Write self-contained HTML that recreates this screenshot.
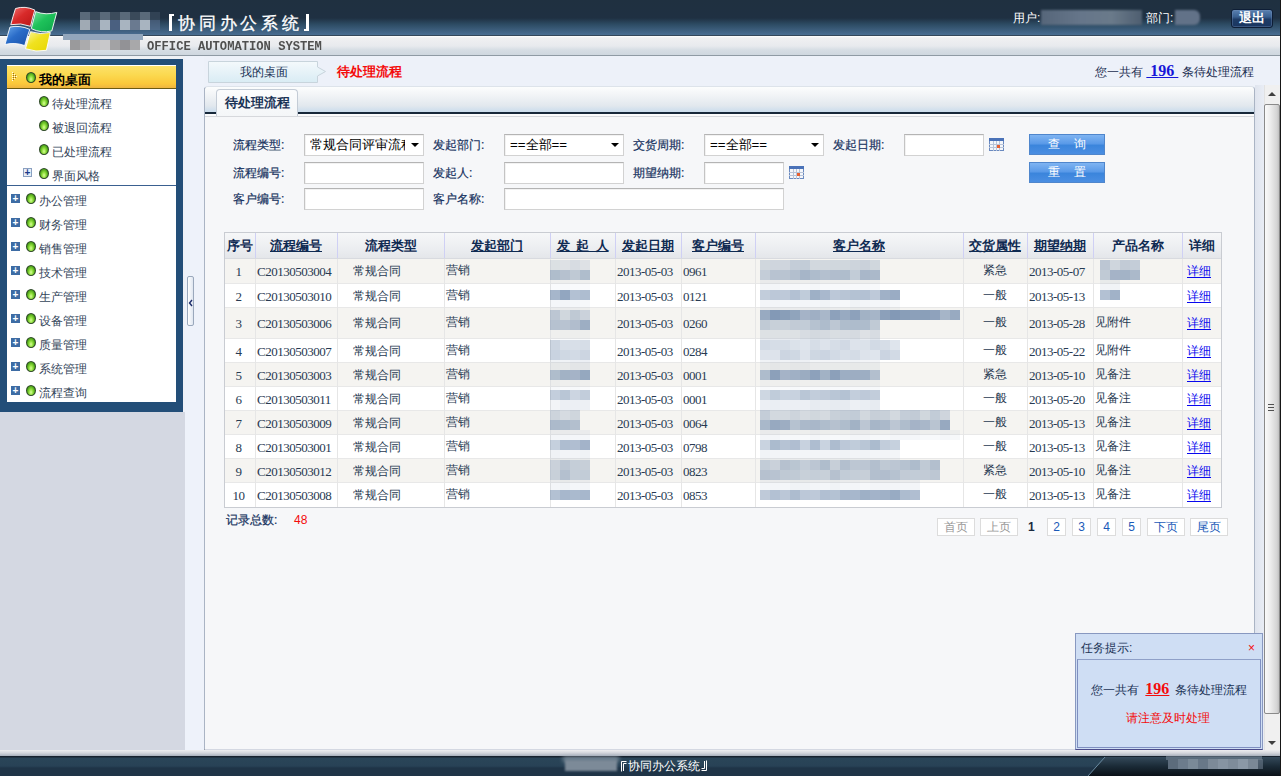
<!DOCTYPE html>
<html><head><meta charset="utf-8">
<style>
*{margin:0;padding:0;box-sizing:border-box}
html,body{width:1281px;height:776px;overflow:hidden;background:#d4d8e2;font-family:"Liberation Sans",sans-serif;font-size:12px;color:#333}
.a{position:absolute;white-space:nowrap}
.blur{filter:blur(2px)}
#hdr{left:0;top:0;width:1281px;height:36px;background:linear-gradient(#1f3040 0,#1f3042 18px,#2c4a62 24px,#4a6e92 35px);}
#hdr2{left:0;top:35px;width:1281px;height:1px;background:#34475a}
#band{left:0;top:36px;width:1281px;height:20px;background:linear-gradient(#ffffff 0,#f0f0f2 2px,#e8eaee 10px,#d6dde4 14px,#cfd7df 19px)}
#bandl{left:0;top:55px;width:1281px;height:1px;background:#8f9aa4}
#ftr{left:0;top:756px;width:1281px;height:20px;background:linear-gradient(#17222e 0,#17222e 1px,#2a4558 2px,#284256 10px,#1f3447 12px,#1f3447)}
#ftrb{left:0;top:750px;width:1281px;height:6px;background:linear-gradient(#eeeef0,#d4d6dc 50%,#a8b0bc)}
#title{left:178px;top:14px;color:#fff;font-size:17px;letter-spacing:3.8px;line-height:20px;-webkit-text-stroke:0.3px #fff}
#oas{left:147px;top:39px;font-family:"Liberation Mono",monospace;font-weight:bold;font-size:12.15px;color:#505050;line-height:14px;transform:scaleY(1.1);transform-origin:0 0}
#user{left:1013px;top:10px;color:#fff;font-size:12px}
#dept{left:1146px;top:10px;color:#fff;font-size:12px}
#logout{left:1231px;top:9px;width:42px;height:19px;border-radius:3px;background:linear-gradient(#5a80b0 0,#3a6090 40%,#1e3c66 55%,#1a3660 100%);border:1px solid #0e1e36;box-shadow:inset 0 0 0 1px rgba(120,150,190,0.35);color:#fff;font-weight:bold;font-size:12.5px;text-align:center;line-height:17px}
#sbf{left:0;top:59px;width:183px;height:353px;background:#234e78}
#sbi{left:7px;top:65px;width:169px;height:337px;background:#fff}
#sbh{left:7px;top:66px;width:169px;height:23px;background:linear-gradient(#fce16a 0,#fbd950 40%,#fbc83a 80%,#eeb540 100%);border-bottom:1px solid #6b5a12}
.ball{position:absolute;width:10px;height:11px;border-radius:50%;border:1px solid #2e4a26;background:radial-gradient(ellipse at 50% 70%,#d8ff9a 0,#8ede3a 35%,#4aa018 70%,#2a5a18 100%)}
.plus{position:absolute;width:9px;height:9px;background:#3d6ca4;color:#fff;font-size:10px;line-height:9px;text-align:center;font-weight:bold}
.si{position:absolute;font-size:12px;color:#34455a;line-height:14px;white-space:nowrap}
#split{left:185px;top:56px;width:19px;height:694px;background:#eef2fa}
#splitb{left:204px;top:88px;width:1px;height:662px;background:#9aa0a8}
#handle{left:187px;top:276px;width:7px;height:50px;border:1px solid #9aa8bc;border-radius:2px;background:linear-gradient(90deg,#fff,#dfe6f0)}
#main{left:185px;top:56px;width:1096px;height:693px;background:#edf1f9}
#panel{left:204px;top:86px;width:1051px;height:663px;background:#f6f7f9;border:1px solid #aab4c4;border-top-color:#dde3ea;border-bottom:none;border-radius:4px 4px 0 0}
#tabbar{left:205px;top:87px;width:1049px;height:25px;background:linear-gradient(#fcfdfd 0,#eff2f5 40%,#e2e8ee 75%,#cadcec 100%);border-radius:4px 4px 0 0}
#tabline{left:205px;top:112px;width:1049px;height:2px;background:#17283a}
#tab{left:216px;top:89px;width:82px;height:27px;background:linear-gradient(#fbfcfd,#f4f6f8);border:1px solid #c4ccd6;border-bottom:none;border-radius:4px 4px 0 0;color:#1a3356;font-weight:bold;font-size:13px;text-align:center;line-height:26px}
</style></head><body>
<div id="hdr" class="a"></div><div id="hdr2" class="a"></div><div id="band" class="a"></div><div id="bandl" class="a"></div>
<div id="main" class="a"></div>
<div class="a" style="left:0px;top:56px;width:183px;height:3px;background:#eff1f5"></div>
<svg class="a" style="left:0;top:0" width="64" height="56" viewBox="0 0 64 56">
 <defs>
  <linearGradient id="lr" x1="0" y1="0" x2="1" y2="1"><stop offset="0" stop-color="#f27070"/><stop offset="0.45" stop-color="#d82a2a"/><stop offset="1" stop-color="#b81414"/></linearGradient>
  <linearGradient id="lg" x1="0" y1="0" x2="1" y2="1"><stop offset="0" stop-color="#7ae0a0"/><stop offset="0.45" stop-color="#1ec25a"/><stop offset="1" stop-color="#0ea44a"/></linearGradient>
  <linearGradient id="lb" x1="0" y1="0" x2="1" y2="1"><stop offset="0" stop-color="#6aa8ec"/><stop offset="0.45" stop-color="#2a6cc8"/><stop offset="1" stop-color="#1a50a8"/></linearGradient>
  <linearGradient id="ly" x1="0" y1="0" x2="1" y2="1"><stop offset="0" stop-color="#fbf6a0"/><stop offset="0.45" stop-color="#f0e220"/><stop offset="1" stop-color="#e6d600"/></linearGradient>
 </defs>
 <path d="M15.5 8.5 Q25 5.5 34.8 10 Q32.5 18 30.5 26.3 Q21 22.5 10.8 24.7 Q13 16 15.5 8.5 Z" fill="url(#lr)" stroke="#fff" stroke-width="0.9"/>
 <path d="M35.6 11.6 Q46 15.5 56.8 12.4 Q54.5 21 51.8 30.9 Q41 33.5 31.3 28.6 Q33.5 20 35.6 11.6 Z" fill="url(#lg)" stroke="#fff" stroke-width="0.9"/>
 <path d="M10 27 Q20 25 29.8 29.4 Q27 37 24.7 45.6 Q15 42 5 44.5 Q7.5 35.5 10 27 Z" fill="url(#lb)" stroke="#fff" stroke-width="0.9"/>
 <path d="M30.5 31.7 Q40 35 50.3 32.5 Q48.5 41 46.4 50.3 Q36 52.5 25.5 48.7 Q28 40 30.5 31.7 Z" fill="url(#ly)" stroke="#fff" stroke-width="0.9"/>
</svg>
<div class="a" style="left:0;top:0;filter:blur(0.6px)"><div class="a" style="left:80px;top:12px;width:10px;height:8px;background:#5a6a7a;opacity:1"></div><div class="a" style="left:80px;top:20px;width:10px;height:10px;background:#a0aab4;opacity:1"></div><div class="a" style="left:90px;top:12px;width:10px;height:8px;background:#3a4a5a;opacity:1"></div><div class="a" style="left:90px;top:20px;width:10px;height:10px;background:#5a6a80;opacity:1"></div><div class="a" style="left:100px;top:12px;width:10px;height:8px;background:#5a6a7a;opacity:1"></div><div class="a" style="left:100px;top:20px;width:10px;height:10px;background:#a8b4c0;opacity:1"></div><div class="a" style="left:110px;top:12px;width:10px;height:8px;background:#3c4c5c;opacity:1"></div><div class="a" style="left:110px;top:20px;width:10px;height:10px;background:#4a6080;opacity:1"></div><div class="a" style="left:120px;top:12px;width:10px;height:8px;background:#5a6a7a;opacity:1"></div><div class="a" style="left:120px;top:20px;width:10px;height:10px;background:#a8b4c0;opacity:1"></div><div class="a" style="left:130px;top:12px;width:10px;height:8px;background:#3a4a5a;opacity:1"></div><div class="a" style="left:130px;top:20px;width:10px;height:10px;background:#6a7a90;opacity:1"></div><div class="a" style="left:140px;top:12px;width:10px;height:8px;background:#5a6a7a;opacity:1"></div><div class="a" style="left:140px;top:20px;width:10px;height:10px;background:#a8b4c0;opacity:1"></div><div class="a" style="left:150px;top:12px;width:10px;height:8px;background:#3e4e60;opacity:0.6"></div><div class="a" style="left:150px;top:20px;width:10px;height:10px;background:#5a7090;opacity:0.6"></div><div class="a" style="left:63px;top:34px;width:80px;height:6px;background:#92a6bc"></div><div class="a" style="left:70px;top:40px;width:10px;height:10px;background:#9a9a9c"></div><div class="a" style="left:80px;top:40px;width:10px;height:10px;background:#ababad"></div><div class="a" style="left:90px;top:40px;width:10px;height:10px;background:#c4c4c6"></div><div class="a" style="left:100px;top:40px;width:10px;height:10px;background:#c8c8ca"></div><div class="a" style="left:110px;top:40px;width:10px;height:10px;background:#a2a2a4"></div><div class="a" style="left:120px;top:40px;width:10px;height:10px;background:#929296"></div><div class="a" style="left:130px;top:40px;width:10px;height:10px;background:#a8a8aa"></div></div>
<div id="title" class="a">协同办公系统</div>
<div class="a" style="left:169px;top:14px;width:5px;height:17px;border-left:3px solid #fff;border-top:2px solid #fff"></div>
<div class="a" style="left:304px;top:14px;width:5px;height:17px;border-right:3px solid #fff;border-bottom:2px solid #fff"></div>
<div id="oas" class="a">OFFICE AUTOMATION SYSTEM</div>
<div id="user" class="a">用户:</div>
<div class="a" style="left:1041px;top:10px;width:101px;height:15px;background:linear-gradient(90deg,#56667a,#66768a 40%,#6a7a8a 70%,#4e5e70);filter:blur(1.2px)"></div>
<div id="dept" class="a">部门:</div>
<div class="a" style="left:1175px;top:10px;width:25px;height:15px;background:#627288;filter:blur(1.2px);border-radius:0 6px 6px 0"></div>
<div id="logout" class="a">退出</div>
<div id="sbf" class="a"></div><div id="sbi" class="a"></div><div id="sbh" class="a"></div>
<svg class="a" style="left:12px;top:72px" width="6" height="10" viewBox="0 0 6 10"><g fill="#fffbe0"><rect x="0" y="0" width="1" height="1"/><rect x="0" y="2" width="1" height="1"/><rect x="0" y="4" width="1" height="1"/><rect x="0" y="6" width="1" height="1"/><rect x="0" y="8" width="1" height="1"/><rect x="2" y="2" width="1" height="1"/><rect x="2" y="4" width="1" height="1"/><rect x="2" y="6" width="1" height="1"/><rect x="4" y="4" width="1" height="1"/></g><g fill="#9a6a10"><rect x="1" y="1" width="1" height="1"/><rect x="1" y="3" width="1" height="1"/><rect x="1" y="5" width="1" height="1"/><rect x="1" y="7" width="1" height="1"/><rect x="3" y="3" width="1" height="1"/><rect x="3" y="5" width="1" height="1"/></g></svg>
<div class="ball" style="left:26px;top:72px;"></div>
<div class="si" style="left:39px;top:73px;font-weight:bold;font-size:13px;color:#000">我的桌面</div>
<div class="ball" style="left:39px;top:96px;"></div>
<div class="si" style="left:52px;top:97px;">待处理流程</div>
<div class="ball" style="left:39px;top:120px;"></div>
<div class="si" style="left:52px;top:121px;">被退回流程</div>
<div class="ball" style="left:39px;top:144px;"></div>
<div class="si" style="left:52px;top:145px;">已处理流程</div>
<div class="plus" style="left:23px;top:168px;background:#e8eef8;border:1px solid #8aa0c0;color:#1a3a8a;line-height:8px">+</div>
<div class="ball" style="left:39px;top:168px;"></div>
<div class="si" style="left:52px;top:169px;">界面风格</div>
<div class="a" style="left:7px;top:185px;width:169px;height:1px;background:#3a6090"></div>
<div class="plus" style="left:11px;top:194px;">+</div>
<div class="ball" style="left:26px;top:193px;"></div>
<div class="si" style="left:39px;top:194px;">办公管理</div>
<div class="plus" style="left:11px;top:218px;">+</div>
<div class="ball" style="left:26px;top:217px;"></div>
<div class="si" style="left:39px;top:218px;">财务管理</div>
<div class="plus" style="left:11px;top:242px;">+</div>
<div class="ball" style="left:26px;top:241px;"></div>
<div class="si" style="left:39px;top:242px;">销售管理</div>
<div class="plus" style="left:11px;top:266px;">+</div>
<div class="ball" style="left:26px;top:265px;"></div>
<div class="si" style="left:39px;top:266px;">技术管理</div>
<div class="plus" style="left:11px;top:290px;">+</div>
<div class="ball" style="left:26px;top:289px;"></div>
<div class="si" style="left:39px;top:290px;">生产管理</div>
<div class="plus" style="left:11px;top:314px;">+</div>
<div class="ball" style="left:26px;top:313px;"></div>
<div class="si" style="left:39px;top:314px;">设备管理</div>
<div class="plus" style="left:11px;top:338px;">+</div>
<div class="ball" style="left:26px;top:337px;"></div>
<div class="si" style="left:39px;top:338px;">质量管理</div>
<div class="plus" style="left:11px;top:362px;">+</div>
<div class="ball" style="left:26px;top:361px;"></div>
<div class="si" style="left:39px;top:362px;">系统管理</div>
<div class="plus" style="left:11px;top:386px;">+</div>
<div class="ball" style="left:26px;top:385px;"></div>
<div class="si" style="left:39px;top:386px;">流程查询</div>
<div id="split" class="a"></div>
<div class="a" style="left:183px;top:56px;width:2px;height:356px;background:#eef1f7"></div>
<div id="splitb" class="a"></div><div id="handle" class="a"></div>
<svg class="a" style="left:188px;top:299px" width="6" height="8" viewBox="0 0 6 8"><path d="M4 1 L1.5 4 L4 7" fill="none" stroke="#1a2a6a" stroke-width="1.4"/></svg>
<div id="panel" class="a"></div><div id="tabbar" class="a"></div><div id="tabline" class="a"></div>
<div class="a" style="left:205px;top:114px;width:1049px;height:2px;background:#fbfbfc"></div>
<div class="a" style="left:205px;top:116px;width:1049px;height:1px;background:#d6d8dc"></div>
<div id="tab" class="a">待处理流程</div>
<svg class="a" style="left:207px;top:60px" width="122" height="24" viewBox="0 0 122 24">
 <defs><linearGradient id="bcg" x1="0" y1="0" x2="0" y2="1"><stop offset="0" stop-color="#f4f9fc"/><stop offset="1" stop-color="#d9ecf4"/></linearGradient></defs>
 <path d="M1.5 1.5 H110.5 V7 L118.5 11.5 L110.5 16 V22.5 H1.5 Z" fill="url(#bcg)" stroke="#c8d4dc" stroke-width="1"/>
</svg>
<div class="a" style="left:240px;top:65px;color:#1a3356;font-size:12px;line-height:14px">我的桌面</div>
<div class="a" style="left:337px;top:64px;color:#f40c0c;font-weight:bold;font-size:13px;line-height:15px">待处理流程</div>
<div class="a" style="left:1095px;top:63px;color:#1a2d50;font-size:12px;line-height:15px">您一共有 <span style="color:#1616d8;font-family:'Liberation Serif',serif;font-weight:bold;font-size:16px;text-decoration:underline">&nbsp;196&nbsp;</span> 条待处理流程</div>
<div class="a" style="left:233px;top:138px;color:#163260;font-size:12px;line-height:14px;-webkit-text-stroke:0.2px #163260">流程类型:</div>
<div class="a" style="left:304px;top:134px;width:120px;height:22px;background:#fff;border:1px solid #d2d2d2;border-top-color:#b4b4b4;border-left-color:#c4c4c4;box-shadow:inset 1px 1px 0 #f2f2f2"></div>
<div class="a" style="left:310px;top:137px;width:95px;overflow:hidden;color:#000;font-size:13.33px;line-height:15px">常规合同评审流程</div>
<div class="a" style="left:411px;top:143px;width:0px;height:0px;border-left:4px solid transparent;border-right:4px solid transparent;border-top:4px solid #000"></div>
<div class="a" style="left:433px;top:138px;color:#163260;font-size:12px;line-height:14px;-webkit-text-stroke:0.2px #163260">发起部门:</div>
<div class="a" style="left:504px;top:134px;width:120px;height:22px;background:#fff;border:1px solid #d2d2d2;border-top-color:#b4b4b4;border-left-color:#c4c4c4;box-shadow:inset 1px 1px 0 #f2f2f2"></div>
<div class="a" style="left:510px;top:137px;width:95px;overflow:hidden;color:#000;font-size:13.33px;line-height:15px">==全部==</div>
<div class="a" style="left:611px;top:143px;width:0px;height:0px;border-left:4px solid transparent;border-right:4px solid transparent;border-top:4px solid #000"></div>
<div class="a" style="left:633px;top:138px;color:#163260;font-size:12px;line-height:14px;-webkit-text-stroke:0.2px #163260">交货周期:</div>
<div class="a" style="left:704px;top:134px;width:120px;height:22px;background:#fff;border:1px solid #d2d2d2;border-top-color:#b4b4b4;border-left-color:#c4c4c4;box-shadow:inset 1px 1px 0 #f2f2f2"></div>
<div class="a" style="left:710px;top:137px;width:95px;overflow:hidden;color:#000;font-size:13.33px;line-height:15px">==全部==</div>
<div class="a" style="left:811px;top:143px;width:0px;height:0px;border-left:4px solid transparent;border-right:4px solid transparent;border-top:4px solid #000"></div>
<div class="a" style="left:833px;top:138px;color:#163260;font-size:12px;line-height:14px;-webkit-text-stroke:0.2px #163260">发起日期:</div>
<div class="a" style="left:904px;top:134px;width:80px;height:22px;background:#fff;border:1px solid #d2d2d2;border-top-color:#b4b4b4;border-left-color:#c4c4c4;box-shadow:inset 1px 1px 0 #f2f2f2"></div>
<div class="a" style="left:233px;top:166px;color:#163260;font-size:12px;line-height:14px;-webkit-text-stroke:0.2px #163260">流程编号:</div>
<div class="a" style="left:304px;top:162px;width:120px;height:22px;background:#fff;border:1px solid #d2d2d2;border-top-color:#b4b4b4;border-left-color:#c4c4c4;box-shadow:inset 1px 1px 0 #f2f2f2"></div>
<div class="a" style="left:433px;top:166px;color:#163260;font-size:12px;line-height:14px;-webkit-text-stroke:0.2px #163260">发起人:</div>
<div class="a" style="left:504px;top:162px;width:120px;height:22px;background:#fff;border:1px solid #d2d2d2;border-top-color:#b4b4b4;border-left-color:#c4c4c4;box-shadow:inset 1px 1px 0 #f2f2f2"></div>
<div class="a" style="left:633px;top:166px;color:#163260;font-size:12px;line-height:14px;-webkit-text-stroke:0.2px #163260">期望纳期:</div>
<div class="a" style="left:704px;top:162px;width:80px;height:22px;background:#fff;border:1px solid #d2d2d2;border-top-color:#b4b4b4;border-left-color:#c4c4c4;box-shadow:inset 1px 1px 0 #f2f2f2"></div>
<div class="a" style="left:233px;top:192px;color:#163260;font-size:12px;line-height:14px;-webkit-text-stroke:0.2px #163260">客户编号:</div>
<div class="a" style="left:304px;top:188px;width:120px;height:22px;background:#fff;border:1px solid #d2d2d2;border-top-color:#b4b4b4;border-left-color:#c4c4c4;box-shadow:inset 1px 1px 0 #f2f2f2"></div>
<div class="a" style="left:433px;top:192px;color:#163260;font-size:12px;line-height:14px;-webkit-text-stroke:0.2px #163260">客户名称:</div>
<div class="a" style="left:504px;top:188px;width:280px;height:22px;background:#fff;border:1px solid #d2d2d2;border-top-color:#b4b4b4;border-left-color:#c4c4c4;box-shadow:inset 1px 1px 0 #f2f2f2"></div>
<svg class="a" style="left:989px;top:138px" width="15" height="13" viewBox="0 0 15 13"><rect x="0.5" y="0.5" width="14" height="12" fill="#f4f6fa" stroke="#6a8ac0"/><rect x="0" y="0" width="15" height="3" fill="#4a72b8"/><g stroke="#b8c4d8" stroke-width="1"><path d="M4.5 3V13M7.5 3V13M10.5 3V13M0 6.5H15M0 9.5H15"/></g><rect x="8" y="7" width="3" height="3" fill="#e86030"/></svg>
<svg class="a" style="left:789px;top:166px" width="15" height="13" viewBox="0 0 15 13"><rect x="0.5" y="0.5" width="14" height="12" fill="#f4f6fa" stroke="#6a8ac0"/><rect x="0" y="0" width="15" height="3" fill="#4a72b8"/><g stroke="#b8c4d8" stroke-width="1"><path d="M4.5 3V13M7.5 3V13M10.5 3V13M0 6.5H15M0 9.5H15"/></g><rect x="8" y="7" width="3" height="3" fill="#e86030"/></svg>
<div class="a" style="left:1029px;top:134px;width:76px;height:21px;background:linear-gradient(#7fb4f2 0,#5a9ae8 45%,#3b85dc 55%,#4a8ee2 100%);border:1px solid #4f86cc;color:#fff;font-size:12px;line-height:19px;text-align:center">查&nbsp;&nbsp;&nbsp;&nbsp;询</div>
<div class="a" style="left:1029px;top:162px;width:76px;height:21px;background:linear-gradient(#7fb4f2 0,#5a9ae8 45%,#3b85dc 55%,#4a8ee2 100%);border:1px solid #4f86cc;color:#fff;font-size:12px;line-height:19px;text-align:center">重&nbsp;&nbsp;&nbsp;&nbsp;置</div>
<div class="a" style="left:224px;top:232px;width:998px;height:276px;background:#fff;border:1px solid #c9ccd2"></div>
<div class="a" style="left:225px;top:233px;width:996px;height:25px;background:linear-gradient(#f6f7f8,#eceef1 60%,#e4e6ea)"></div>
<div class="a" style="left:225px;top:258px;width:996px;height:1px;background:#d8dadf"></div>
<div class="a" style="left:225px;top:259px;width:996px;height:24px;background:#f5f4f1"></div>
<div class="a" style="left:225px;top:283px;width:996px;height:1px;background:#e8e8e8"></div>
<div class="a" style="left:225px;top:284px;width:996px;height:23px;background:#ffffff"></div>
<div class="a" style="left:225px;top:307px;width:996px;height:1px;background:#e8e8e8"></div>
<div class="a" style="left:225px;top:308px;width:996px;height:30px;background:#f5f4f1"></div>
<div class="a" style="left:225px;top:338px;width:996px;height:1px;background:#e8e8e8"></div>
<div class="a" style="left:225px;top:339px;width:996px;height:23px;background:#ffffff"></div>
<div class="a" style="left:225px;top:362px;width:996px;height:1px;background:#e8e8e8"></div>
<div class="a" style="left:225px;top:363px;width:996px;height:23px;background:#f5f4f1"></div>
<div class="a" style="left:225px;top:386px;width:996px;height:1px;background:#e8e8e8"></div>
<div class="a" style="left:225px;top:387px;width:996px;height:23px;background:#ffffff"></div>
<div class="a" style="left:225px;top:410px;width:996px;height:1px;background:#e8e8e8"></div>
<div class="a" style="left:225px;top:411px;width:996px;height:23px;background:#f5f4f1"></div>
<div class="a" style="left:225px;top:434px;width:996px;height:1px;background:#e8e8e8"></div>
<div class="a" style="left:225px;top:435px;width:996px;height:23px;background:#ffffff"></div>
<div class="a" style="left:225px;top:458px;width:996px;height:1px;background:#e8e8e8"></div>
<div class="a" style="left:225px;top:459px;width:996px;height:23px;background:#f5f4f1"></div>
<div class="a" style="left:225px;top:482px;width:996px;height:1px;background:#e8e8e8"></div>
<div class="a" style="left:225px;top:483px;width:996px;height:24px;background:#ffffff"></div>
<div class="a" style="left:255px;top:233px;width:1px;height:25px;background:#cfd0f4"></div>
<div class="a" style="left:255px;top:259px;width:1px;height:248px;background:#e6e6e6"></div>
<div class="a" style="left:337px;top:233px;width:1px;height:25px;background:#cfd0f4"></div>
<div class="a" style="left:337px;top:259px;width:1px;height:248px;background:#e6e6e6"></div>
<div class="a" style="left:444px;top:233px;width:1px;height:25px;background:#cfd0f4"></div>
<div class="a" style="left:444px;top:259px;width:1px;height:248px;background:#e6e6e6"></div>
<div class="a" style="left:550px;top:233px;width:1px;height:25px;background:#cfd0f4"></div>
<div class="a" style="left:550px;top:259px;width:1px;height:248px;background:#e6e6e6"></div>
<div class="a" style="left:615px;top:233px;width:1px;height:25px;background:#cfd0f4"></div>
<div class="a" style="left:615px;top:259px;width:1px;height:248px;background:#e6e6e6"></div>
<div class="a" style="left:681px;top:233px;width:1px;height:25px;background:#cfd0f4"></div>
<div class="a" style="left:681px;top:259px;width:1px;height:248px;background:#e6e6e6"></div>
<div class="a" style="left:755px;top:233px;width:1px;height:25px;background:#cfd0f4"></div>
<div class="a" style="left:755px;top:259px;width:1px;height:248px;background:#e6e6e6"></div>
<div class="a" style="left:963px;top:233px;width:1px;height:25px;background:#cfd0f4"></div>
<div class="a" style="left:963px;top:259px;width:1px;height:248px;background:#e6e6e6"></div>
<div class="a" style="left:1027px;top:233px;width:1px;height:25px;background:#cfd0f4"></div>
<div class="a" style="left:1027px;top:259px;width:1px;height:248px;background:#e6e6e6"></div>
<div class="a" style="left:1093px;top:233px;width:1px;height:25px;background:#cfd0f4"></div>
<div class="a" style="left:1093px;top:259px;width:1px;height:248px;background:#e6e6e6"></div>
<div class="a" style="left:1182px;top:233px;width:1px;height:25px;background:#cfd0f4"></div>
<div class="a" style="left:1182px;top:259px;width:1px;height:248px;background:#e6e6e6"></div>
<div class="a" style="left:224px;top:239px;width:31px;text-align:center;font-weight:bold;font-size:13px;line-height:14px;color:#0f2a52;">序号</div>
<div class="a" style="left:255px;top:239px;width:82px;text-align:center;font-weight:bold;font-size:13px;line-height:14px;color:#0f2a52;text-decoration:underline;">流程编号</div>
<div class="a" style="left:337px;top:239px;width:107px;text-align:center;font-weight:bold;font-size:13px;line-height:14px;color:#0f2a52;">流程类型</div>
<div class="a" style="left:444px;top:239px;width:106px;text-align:center;font-weight:bold;font-size:13px;line-height:14px;color:#0f2a52;text-decoration:underline;">发起部门</div>
<div class="a" style="left:550px;top:239px;width:65px;text-align:center;font-weight:bold;font-size:13px;line-height:14px;color:#0f2a52;text-decoration:underline;">发&ensp;起&ensp;人</div>
<div class="a" style="left:615px;top:239px;width:66px;text-align:center;font-weight:bold;font-size:13px;line-height:14px;color:#0f2a52;text-decoration:underline;">发起日期</div>
<div class="a" style="left:681px;top:239px;width:74px;text-align:center;font-weight:bold;font-size:13px;line-height:14px;color:#0f2a52;text-decoration:underline;">客户编号</div>
<div class="a" style="left:755px;top:239px;width:208px;text-align:center;font-weight:bold;font-size:13px;line-height:14px;color:#0f2a52;text-decoration:underline;">客户名称</div>
<div class="a" style="left:963px;top:239px;width:64px;text-align:center;font-weight:bold;font-size:13px;line-height:14px;color:#0f2a52;text-decoration:underline;">交货属性</div>
<div class="a" style="left:1027px;top:239px;width:66px;text-align:center;font-weight:bold;font-size:13px;line-height:14px;color:#0f2a52;text-decoration:underline;">期望纳期</div>
<div class="a" style="left:1093px;top:239px;width:89px;text-align:center;font-weight:bold;font-size:13px;line-height:14px;color:#0f2a52;">产品名称</div>
<div class="a" style="left:1182px;top:239px;width:39px;text-align:center;font-weight:bold;font-size:13px;line-height:14px;color:#0f2a52;">详细</div>
<div class="a" style="left:223px;top:265px;width:31px;text-align:center;font-family:'Liberation Serif',serif;color:#283a52;font-size:13px;letter-spacing:-0.5px;line-height:14px">1</div>
<div class="a" style="left:257px;top:265px;font-family:'Liberation Serif',serif;color:#283a52;font-size:13px;letter-spacing:-0.5px;line-height:14px">C20130503004</div>
<div class="a" style="left:353px;top:264px;color:#283a52;font-size:12px;line-height:14px">常规合同</div>
<div class="a" style="left:446px;top:263px;color:#283a52;font-size:12px;line-height:14px">营销</div>
<div class="a" style="left:617px;top:265px;font-family:'Liberation Serif',serif;color:#283a52;font-size:13px;letter-spacing:-0.5px;line-height:14px">2013-05-03</div>
<div class="a" style="left:683px;top:265px;font-family:'Liberation Serif',serif;color:#283a52;font-size:13px;letter-spacing:-0.5px;line-height:14px">0961</div>
<div class="a" style="left:963px;top:263px;width:64px;text-align:center;color:#283a52;font-size:12px;line-height:14px">紧急</div>
<div class="a" style="left:1029px;top:265px;font-family:'Liberation Serif',serif;color:#283a52;font-size:13px;letter-spacing:-0.5px;line-height:14px">2013-05-07</div>
<div class="a" style="left:1187px;top:264px;color:#0808ee;font-size:12px;line-height:14px;text-decoration:underline;text-underline-offset:2px">详细</div>
<div class="a" style="left:223px;top:290px;width:31px;text-align:center;font-family:'Liberation Serif',serif;color:#283a52;font-size:13px;letter-spacing:-0.5px;line-height:14px">2</div>
<div class="a" style="left:257px;top:290px;font-family:'Liberation Serif',serif;color:#283a52;font-size:13px;letter-spacing:-0.5px;line-height:14px">C20130503010</div>
<div class="a" style="left:353px;top:289px;color:#283a52;font-size:12px;line-height:14px">常规合同</div>
<div class="a" style="left:446px;top:288px;color:#283a52;font-size:12px;line-height:14px">营销</div>
<div class="a" style="left:617px;top:290px;font-family:'Liberation Serif',serif;color:#283a52;font-size:13px;letter-spacing:-0.5px;line-height:14px">2013-05-03</div>
<div class="a" style="left:683px;top:290px;font-family:'Liberation Serif',serif;color:#283a52;font-size:13px;letter-spacing:-0.5px;line-height:14px">0121</div>
<div class="a" style="left:963px;top:288px;width:64px;text-align:center;color:#283a52;font-size:12px;line-height:14px">一般</div>
<div class="a" style="left:1029px;top:290px;font-family:'Liberation Serif',serif;color:#283a52;font-size:13px;letter-spacing:-0.5px;line-height:14px">2013-05-13</div>
<div class="a" style="left:1187px;top:289px;color:#0808ee;font-size:12px;line-height:14px;text-decoration:underline;text-underline-offset:2px">详细</div>
<div class="a" style="left:223px;top:317px;width:31px;text-align:center;font-family:'Liberation Serif',serif;color:#283a52;font-size:13px;letter-spacing:-0.5px;line-height:14px">3</div>
<div class="a" style="left:257px;top:317px;font-family:'Liberation Serif',serif;color:#283a52;font-size:13px;letter-spacing:-0.5px;line-height:14px">C20130503006</div>
<div class="a" style="left:353px;top:316px;color:#283a52;font-size:12px;line-height:14px">常规合同</div>
<div class="a" style="left:446px;top:315px;color:#283a52;font-size:12px;line-height:14px">营销</div>
<div class="a" style="left:617px;top:317px;font-family:'Liberation Serif',serif;color:#283a52;font-size:13px;letter-spacing:-0.5px;line-height:14px">2013-05-03</div>
<div class="a" style="left:683px;top:317px;font-family:'Liberation Serif',serif;color:#283a52;font-size:13px;letter-spacing:-0.5px;line-height:14px">0260</div>
<div class="a" style="left:963px;top:315px;width:64px;text-align:center;color:#283a52;font-size:12px;line-height:14px">一般</div>
<div class="a" style="left:1029px;top:317px;font-family:'Liberation Serif',serif;color:#283a52;font-size:13px;letter-spacing:-0.5px;line-height:14px">2013-05-28</div>
<div class="a" style="left:1095px;top:315px;color:#283a52;font-size:12px;line-height:14px">见附件</div>
<div class="a" style="left:1187px;top:316px;color:#0808ee;font-size:12px;line-height:14px;text-decoration:underline;text-underline-offset:2px">详细</div>
<div class="a" style="left:223px;top:345px;width:31px;text-align:center;font-family:'Liberation Serif',serif;color:#283a52;font-size:13px;letter-spacing:-0.5px;line-height:14px">4</div>
<div class="a" style="left:257px;top:345px;font-family:'Liberation Serif',serif;color:#283a52;font-size:13px;letter-spacing:-0.5px;line-height:14px">C20130503007</div>
<div class="a" style="left:353px;top:344px;color:#283a52;font-size:12px;line-height:14px">常规合同</div>
<div class="a" style="left:446px;top:343px;color:#283a52;font-size:12px;line-height:14px">营销</div>
<div class="a" style="left:617px;top:345px;font-family:'Liberation Serif',serif;color:#283a52;font-size:13px;letter-spacing:-0.5px;line-height:14px">2013-05-03</div>
<div class="a" style="left:683px;top:345px;font-family:'Liberation Serif',serif;color:#283a52;font-size:13px;letter-spacing:-0.5px;line-height:14px">0284</div>
<div class="a" style="left:963px;top:343px;width:64px;text-align:center;color:#283a52;font-size:12px;line-height:14px">一般</div>
<div class="a" style="left:1029px;top:345px;font-family:'Liberation Serif',serif;color:#283a52;font-size:13px;letter-spacing:-0.5px;line-height:14px">2013-05-22</div>
<div class="a" style="left:1095px;top:343px;color:#283a52;font-size:12px;line-height:14px">见附件</div>
<div class="a" style="left:1187px;top:344px;color:#0808ee;font-size:12px;line-height:14px;text-decoration:underline;text-underline-offset:2px">详细</div>
<div class="a" style="left:223px;top:369px;width:31px;text-align:center;font-family:'Liberation Serif',serif;color:#283a52;font-size:13px;letter-spacing:-0.5px;line-height:14px">5</div>
<div class="a" style="left:257px;top:369px;font-family:'Liberation Serif',serif;color:#283a52;font-size:13px;letter-spacing:-0.5px;line-height:14px">C20130503003</div>
<div class="a" style="left:353px;top:368px;color:#283a52;font-size:12px;line-height:14px">常规合同</div>
<div class="a" style="left:446px;top:367px;color:#283a52;font-size:12px;line-height:14px">营销</div>
<div class="a" style="left:617px;top:369px;font-family:'Liberation Serif',serif;color:#283a52;font-size:13px;letter-spacing:-0.5px;line-height:14px">2013-05-03</div>
<div class="a" style="left:683px;top:369px;font-family:'Liberation Serif',serif;color:#283a52;font-size:13px;letter-spacing:-0.5px;line-height:14px">0001</div>
<div class="a" style="left:963px;top:367px;width:64px;text-align:center;color:#283a52;font-size:12px;line-height:14px">紧急</div>
<div class="a" style="left:1029px;top:369px;font-family:'Liberation Serif',serif;color:#283a52;font-size:13px;letter-spacing:-0.5px;line-height:14px">2013-05-10</div>
<div class="a" style="left:1095px;top:367px;color:#283a52;font-size:12px;line-height:14px">见备注</div>
<div class="a" style="left:1187px;top:368px;color:#0808ee;font-size:12px;line-height:14px;text-decoration:underline;text-underline-offset:2px">详细</div>
<div class="a" style="left:223px;top:393px;width:31px;text-align:center;font-family:'Liberation Serif',serif;color:#283a52;font-size:13px;letter-spacing:-0.5px;line-height:14px">6</div>
<div class="a" style="left:257px;top:393px;font-family:'Liberation Serif',serif;color:#283a52;font-size:13px;letter-spacing:-0.5px;line-height:14px">C20130503011</div>
<div class="a" style="left:353px;top:392px;color:#283a52;font-size:12px;line-height:14px">常规合同</div>
<div class="a" style="left:446px;top:391px;color:#283a52;font-size:12px;line-height:14px">营销</div>
<div class="a" style="left:617px;top:393px;font-family:'Liberation Serif',serif;color:#283a52;font-size:13px;letter-spacing:-0.5px;line-height:14px">2013-05-03</div>
<div class="a" style="left:683px;top:393px;font-family:'Liberation Serif',serif;color:#283a52;font-size:13px;letter-spacing:-0.5px;line-height:14px">0001</div>
<div class="a" style="left:963px;top:391px;width:64px;text-align:center;color:#283a52;font-size:12px;line-height:14px">一般</div>
<div class="a" style="left:1029px;top:393px;font-family:'Liberation Serif',serif;color:#283a52;font-size:13px;letter-spacing:-0.5px;line-height:14px">2013-05-20</div>
<div class="a" style="left:1095px;top:391px;color:#283a52;font-size:12px;line-height:14px">见备注</div>
<div class="a" style="left:1187px;top:392px;color:#0808ee;font-size:12px;line-height:14px;text-decoration:underline;text-underline-offset:2px">详细</div>
<div class="a" style="left:223px;top:417px;width:31px;text-align:center;font-family:'Liberation Serif',serif;color:#283a52;font-size:13px;letter-spacing:-0.5px;line-height:14px">7</div>
<div class="a" style="left:257px;top:417px;font-family:'Liberation Serif',serif;color:#283a52;font-size:13px;letter-spacing:-0.5px;line-height:14px">C20130503009</div>
<div class="a" style="left:353px;top:416px;color:#283a52;font-size:12px;line-height:14px">常规合同</div>
<div class="a" style="left:446px;top:415px;color:#283a52;font-size:12px;line-height:14px">营销</div>
<div class="a" style="left:617px;top:417px;font-family:'Liberation Serif',serif;color:#283a52;font-size:13px;letter-spacing:-0.5px;line-height:14px">2013-05-03</div>
<div class="a" style="left:683px;top:417px;font-family:'Liberation Serif',serif;color:#283a52;font-size:13px;letter-spacing:-0.5px;line-height:14px">0064</div>
<div class="a" style="left:963px;top:415px;width:64px;text-align:center;color:#283a52;font-size:12px;line-height:14px">一般</div>
<div class="a" style="left:1029px;top:417px;font-family:'Liberation Serif',serif;color:#283a52;font-size:13px;letter-spacing:-0.5px;line-height:14px">2013-05-13</div>
<div class="a" style="left:1095px;top:415px;color:#283a52;font-size:12px;line-height:14px">见备注</div>
<div class="a" style="left:1187px;top:416px;color:#0808ee;font-size:12px;line-height:14px;text-decoration:underline;text-underline-offset:2px">详细</div>
<div class="a" style="left:223px;top:441px;width:31px;text-align:center;font-family:'Liberation Serif',serif;color:#283a52;font-size:13px;letter-spacing:-0.5px;line-height:14px">8</div>
<div class="a" style="left:257px;top:441px;font-family:'Liberation Serif',serif;color:#283a52;font-size:13px;letter-spacing:-0.5px;line-height:14px">C20130503001</div>
<div class="a" style="left:353px;top:440px;color:#283a52;font-size:12px;line-height:14px">常规合同</div>
<div class="a" style="left:446px;top:439px;color:#283a52;font-size:12px;line-height:14px">营销</div>
<div class="a" style="left:617px;top:441px;font-family:'Liberation Serif',serif;color:#283a52;font-size:13px;letter-spacing:-0.5px;line-height:14px">2013-05-03</div>
<div class="a" style="left:683px;top:441px;font-family:'Liberation Serif',serif;color:#283a52;font-size:13px;letter-spacing:-0.5px;line-height:14px">0798</div>
<div class="a" style="left:963px;top:439px;width:64px;text-align:center;color:#283a52;font-size:12px;line-height:14px">一般</div>
<div class="a" style="left:1029px;top:441px;font-family:'Liberation Serif',serif;color:#283a52;font-size:13px;letter-spacing:-0.5px;line-height:14px">2013-05-13</div>
<div class="a" style="left:1095px;top:439px;color:#283a52;font-size:12px;line-height:14px">见备注</div>
<div class="a" style="left:1187px;top:440px;color:#0808ee;font-size:12px;line-height:14px;text-decoration:underline;text-underline-offset:2px">详细</div>
<div class="a" style="left:223px;top:465px;width:31px;text-align:center;font-family:'Liberation Serif',serif;color:#283a52;font-size:13px;letter-spacing:-0.5px;line-height:14px">9</div>
<div class="a" style="left:257px;top:465px;font-family:'Liberation Serif',serif;color:#283a52;font-size:13px;letter-spacing:-0.5px;line-height:14px">C20130503012</div>
<div class="a" style="left:353px;top:464px;color:#283a52;font-size:12px;line-height:14px">常规合同</div>
<div class="a" style="left:446px;top:463px;color:#283a52;font-size:12px;line-height:14px">营销</div>
<div class="a" style="left:617px;top:465px;font-family:'Liberation Serif',serif;color:#283a52;font-size:13px;letter-spacing:-0.5px;line-height:14px">2013-05-03</div>
<div class="a" style="left:683px;top:465px;font-family:'Liberation Serif',serif;color:#283a52;font-size:13px;letter-spacing:-0.5px;line-height:14px">0823</div>
<div class="a" style="left:963px;top:463px;width:64px;text-align:center;color:#283a52;font-size:12px;line-height:14px">紧急</div>
<div class="a" style="left:1029px;top:465px;font-family:'Liberation Serif',serif;color:#283a52;font-size:13px;letter-spacing:-0.5px;line-height:14px">2013-05-10</div>
<div class="a" style="left:1095px;top:463px;color:#283a52;font-size:12px;line-height:14px">见备注</div>
<div class="a" style="left:1187px;top:464px;color:#0808ee;font-size:12px;line-height:14px;text-decoration:underline;text-underline-offset:2px">详细</div>
<div class="a" style="left:223px;top:489px;width:31px;text-align:center;font-family:'Liberation Serif',serif;color:#283a52;font-size:13px;letter-spacing:-0.5px;line-height:14px">10</div>
<div class="a" style="left:257px;top:489px;font-family:'Liberation Serif',serif;color:#283a52;font-size:13px;letter-spacing:-0.5px;line-height:14px">C20130503008</div>
<div class="a" style="left:353px;top:488px;color:#283a52;font-size:12px;line-height:14px">常规合同</div>
<div class="a" style="left:446px;top:487px;color:#283a52;font-size:12px;line-height:14px">营销</div>
<div class="a" style="left:617px;top:489px;font-family:'Liberation Serif',serif;color:#283a52;font-size:13px;letter-spacing:-0.5px;line-height:14px">2013-05-03</div>
<div class="a" style="left:683px;top:489px;font-family:'Liberation Serif',serif;color:#283a52;font-size:13px;letter-spacing:-0.5px;line-height:14px">0853</div>
<div class="a" style="left:963px;top:487px;width:64px;text-align:center;color:#283a52;font-size:12px;line-height:14px">一般</div>
<div class="a" style="left:1029px;top:489px;font-family:'Liberation Serif',serif;color:#283a52;font-size:13px;letter-spacing:-0.5px;line-height:14px">2013-05-13</div>
<div class="a" style="left:1095px;top:487px;color:#283a52;font-size:12px;line-height:14px">见备注</div>
<div class="a" style="left:1187px;top:488px;color:#0808ee;font-size:12px;line-height:14px;text-decoration:underline;text-underline-offset:2px">详细</div>
<div class="a" style="left:0;top:0;filter:blur(0.5px)"><div class="a" style="left:550px;top:260px;width:10px;height:10px;background:rgba(106,133,168,0.18)"></div><div class="a" style="left:560px;top:260px;width:10px;height:10px;background:rgba(106,133,168,0.16)"></div><div class="a" style="left:570px;top:260px;width:10px;height:10px;background:rgba(106,133,168,0.21)"></div><div class="a" style="left:580px;top:260px;width:10px;height:10px;background:rgba(106,133,168,0.16)"></div><div class="a" style="left:550px;top:270px;width:10px;height:10px;background:rgba(106,133,168,0.50)"></div><div class="a" style="left:560px;top:270px;width:10px;height:10px;background:rgba(106,133,168,0.46)"></div><div class="a" style="left:570px;top:270px;width:10px;height:10px;background:rgba(106,133,168,0.39)"></div><div class="a" style="left:580px;top:270px;width:10px;height:10px;background:rgba(106,133,168,0.50)"></div><div class="a" style="left:550px;top:280px;width:10px;height:10px;background:rgba(106,133,168,0.04)"></div><div class="a" style="left:560px;top:280px;width:10px;height:10px;background:rgba(106,133,168,0.05)"></div><div class="a" style="left:570px;top:280px;width:10px;height:10px;background:rgba(106,133,168,0.04)"></div><div class="a" style="left:580px;top:280px;width:10px;height:10px;background:rgba(106,133,168,0.04)"></div><div class="a" style="left:550px;top:290px;width:10px;height:10px;background:rgba(106,133,168,0.60)"></div><div class="a" style="left:560px;top:290px;width:10px;height:10px;background:rgba(106,133,168,0.73)"></div><div class="a" style="left:570px;top:290px;width:10px;height:10px;background:rgba(106,133,168,0.51)"></div><div class="a" style="left:580px;top:290px;width:10px;height:10px;background:rgba(106,133,168,0.54)"></div><div class="a" style="left:550px;top:300px;width:10px;height:10px;background:rgba(106,133,168,0.07)"></div><div class="a" style="left:560px;top:300px;width:10px;height:10px;background:rgba(106,133,168,0.08)"></div><div class="a" style="left:570px;top:300px;width:10px;height:10px;background:rgba(106,133,168,0.07)"></div><div class="a" style="left:580px;top:300px;width:10px;height:10px;background:rgba(106,133,168,0.06)"></div><div class="a" style="left:550px;top:310px;width:10px;height:10px;background:rgba(106,133,168,0.41)"></div><div class="a" style="left:560px;top:310px;width:10px;height:10px;background:rgba(106,133,168,0.26)"></div><div class="a" style="left:570px;top:310px;width:10px;height:10px;background:rgba(106,133,168,0.39)"></div><div class="a" style="left:580px;top:310px;width:10px;height:10px;background:rgba(106,133,168,0.30)"></div><div class="a" style="left:550px;top:320px;width:10px;height:10px;background:rgba(106,133,168,0.45)"></div><div class="a" style="left:560px;top:320px;width:10px;height:10px;background:rgba(106,133,168,0.44)"></div><div class="a" style="left:570px;top:320px;width:10px;height:10px;background:rgba(106,133,168,0.49)"></div><div class="a" style="left:580px;top:320px;width:10px;height:10px;background:rgba(106,133,168,0.63)"></div><div class="a" style="left:550px;top:330px;width:10px;height:10px;background:rgba(106,133,168,0.04)"></div><div class="a" style="left:560px;top:330px;width:10px;height:10px;background:rgba(106,133,168,0.05)"></div><div class="a" style="left:570px;top:330px;width:10px;height:10px;background:rgba(106,133,168,0.05)"></div><div class="a" style="left:580px;top:330px;width:10px;height:10px;background:rgba(106,133,168,0.05)"></div><div class="a" style="left:550px;top:340px;width:10px;height:10px;background:rgba(106,133,168,0.34)"></div><div class="a" style="left:560px;top:340px;width:10px;height:10px;background:rgba(106,133,168,0.26)"></div><div class="a" style="left:570px;top:340px;width:10px;height:10px;background:rgba(106,133,168,0.26)"></div><div class="a" style="left:580px;top:340px;width:10px;height:10px;background:rgba(106,133,168,0.28)"></div><div class="a" style="left:550px;top:350px;width:10px;height:10px;background:rgba(106,133,168,0.36)"></div><div class="a" style="left:560px;top:350px;width:10px;height:10px;background:rgba(106,133,168,0.32)"></div><div class="a" style="left:570px;top:350px;width:10px;height:10px;background:rgba(106,133,168,0.30)"></div><div class="a" style="left:580px;top:350px;width:10px;height:10px;background:rgba(106,133,168,0.34)"></div><div class="a" style="left:550px;top:360px;width:10px;height:10px;background:rgba(106,133,168,0.11)"></div><div class="a" style="left:560px;top:360px;width:10px;height:10px;background:rgba(106,133,168,0.10)"></div><div class="a" style="left:570px;top:360px;width:10px;height:10px;background:rgba(106,133,168,0.13)"></div><div class="a" style="left:580px;top:360px;width:10px;height:10px;background:rgba(106,133,168,0.13)"></div><div class="a" style="left:550px;top:370px;width:10px;height:10px;background:rgba(106,133,168,0.50)"></div><div class="a" style="left:560px;top:370px;width:10px;height:10px;background:rgba(106,133,168,0.60)"></div><div class="a" style="left:570px;top:370px;width:10px;height:10px;background:rgba(106,133,168,0.58)"></div><div class="a" style="left:580px;top:370px;width:10px;height:10px;background:rgba(106,133,168,0.69)"></div><div class="a" style="left:550px;top:380px;width:10px;height:10px;background:rgba(106,133,168,0.06)"></div><div class="a" style="left:560px;top:380px;width:10px;height:10px;background:rgba(106,133,168,0.04)"></div><div class="a" style="left:570px;top:380px;width:10px;height:10px;background:rgba(106,133,168,0.06)"></div><div class="a" style="left:580px;top:380px;width:10px;height:10px;background:rgba(106,133,168,0.04)"></div><div class="a" style="left:550px;top:390px;width:10px;height:10px;background:rgba(106,133,168,0.40)"></div><div class="a" style="left:560px;top:390px;width:10px;height:10px;background:rgba(106,133,168,0.47)"></div><div class="a" style="left:570px;top:390px;width:10px;height:10px;background:rgba(106,133,168,0.34)"></div><div class="a" style="left:580px;top:390px;width:10px;height:10px;background:rgba(106,133,168,0.41)"></div><div class="a" style="left:550px;top:400px;width:10px;height:10px;background:rgba(106,133,168,0.09)"></div><div class="a" style="left:560px;top:400px;width:10px;height:10px;background:rgba(106,133,168,0.13)"></div><div class="a" style="left:570px;top:400px;width:10px;height:10px;background:rgba(106,133,168,0.13)"></div><div class="a" style="left:580px;top:400px;width:10px;height:10px;background:rgba(106,133,168,0.12)"></div><div class="a" style="left:550px;top:410px;width:10px;height:10px;background:rgba(106,133,168,0.29)"></div><div class="a" style="left:560px;top:410px;width:10px;height:10px;background:rgba(106,133,168,0.22)"></div><div class="a" style="left:570px;top:410px;width:10px;height:10px;background:rgba(106,133,168,0.27)"></div><div class="a" style="left:550px;top:420px;width:10px;height:10px;background:rgba(106,133,168,0.52)"></div><div class="a" style="left:560px;top:420px;width:10px;height:10px;background:rgba(106,133,168,0.51)"></div><div class="a" style="left:570px;top:420px;width:10px;height:10px;background:rgba(106,133,168,0.48)"></div><div class="a" style="left:550px;top:430px;width:10px;height:10px;background:rgba(106,133,168,0.08)"></div><div class="a" style="left:560px;top:430px;width:10px;height:10px;background:rgba(106,133,168,0.08)"></div><div class="a" style="left:570px;top:430px;width:10px;height:10px;background:rgba(106,133,168,0.07)"></div><div class="a" style="left:580px;top:430px;width:10px;height:10px;background:rgba(106,133,168,0.07)"></div><div class="a" style="left:550px;top:440px;width:10px;height:10px;background:rgba(106,133,168,0.39)"></div><div class="a" style="left:560px;top:440px;width:10px;height:10px;background:rgba(106,133,168,0.54)"></div><div class="a" style="left:570px;top:440px;width:10px;height:10px;background:rgba(106,133,168,0.53)"></div><div class="a" style="left:580px;top:440px;width:10px;height:10px;background:rgba(106,133,168,0.62)"></div><div class="a" style="left:550px;top:450px;width:10px;height:10px;background:rgba(106,133,168,0.11)"></div><div class="a" style="left:560px;top:450px;width:10px;height:10px;background:rgba(106,133,168,0.09)"></div><div class="a" style="left:570px;top:450px;width:10px;height:10px;background:rgba(106,133,168,0.09)"></div><div class="a" style="left:580px;top:450px;width:10px;height:10px;background:rgba(106,133,168,0.11)"></div><div class="a" style="left:550px;top:460px;width:10px;height:10px;background:rgba(106,133,168,0.31)"></div><div class="a" style="left:560px;top:460px;width:10px;height:10px;background:rgba(106,133,168,0.40)"></div><div class="a" style="left:570px;top:460px;width:10px;height:10px;background:rgba(106,133,168,0.34)"></div><div class="a" style="left:580px;top:460px;width:10px;height:10px;background:rgba(106,133,168,0.33)"></div><div class="a" style="left:550px;top:470px;width:10px;height:10px;background:rgba(106,133,168,0.32)"></div><div class="a" style="left:560px;top:470px;width:10px;height:10px;background:rgba(106,133,168,0.47)"></div><div class="a" style="left:570px;top:470px;width:10px;height:10px;background:rgba(106,133,168,0.34)"></div><div class="a" style="left:580px;top:470px;width:10px;height:10px;background:rgba(106,133,168,0.36)"></div><div class="a" style="left:550px;top:480px;width:10px;height:10px;background:rgba(106,133,168,0.08)"></div><div class="a" style="left:560px;top:480px;width:10px;height:10px;background:rgba(106,133,168,0.10)"></div><div class="a" style="left:570px;top:480px;width:10px;height:10px;background:rgba(106,133,168,0.07)"></div><div class="a" style="left:580px;top:480px;width:10px;height:10px;background:rgba(106,133,168,0.08)"></div><div class="a" style="left:550px;top:490px;width:10px;height:10px;background:rgba(106,133,168,0.51)"></div><div class="a" style="left:560px;top:490px;width:10px;height:10px;background:rgba(106,133,168,0.59)"></div><div class="a" style="left:570px;top:490px;width:10px;height:10px;background:rgba(106,133,168,0.57)"></div><div class="a" style="left:580px;top:490px;width:10px;height:10px;background:rgba(106,133,168,0.59)"></div></div>
<div class="a" style="left:0;top:0;filter:blur(0.5px)"><div class="a" style="left:760px;top:260px;width:10px;height:10px;background:rgba(106,133,168,0.26)"></div><div class="a" style="left:770px;top:260px;width:10px;height:10px;background:rgba(106,133,168,0.28)"></div><div class="a" style="left:780px;top:260px;width:10px;height:10px;background:rgba(106,133,168,0.28)"></div><div class="a" style="left:790px;top:260px;width:10px;height:10px;background:rgba(106,133,168,0.35)"></div><div class="a" style="left:800px;top:260px;width:10px;height:10px;background:rgba(106,133,168,0.36)"></div><div class="a" style="left:810px;top:260px;width:10px;height:10px;background:rgba(106,133,168,0.25)"></div><div class="a" style="left:820px;top:260px;width:10px;height:10px;background:rgba(106,133,168,0.25)"></div><div class="a" style="left:830px;top:260px;width:10px;height:10px;background:rgba(106,133,168,0.26)"></div><div class="a" style="left:840px;top:260px;width:10px;height:10px;background:rgba(106,133,168,0.26)"></div><div class="a" style="left:850px;top:260px;width:10px;height:10px;background:rgba(106,133,168,0.29)"></div><div class="a" style="left:860px;top:260px;width:10px;height:10px;background:rgba(106,133,168,0.31)"></div><div class="a" style="left:870px;top:260px;width:10px;height:10px;background:rgba(106,133,168,0.26)"></div><div class="a" style="left:760px;top:270px;width:10px;height:10px;background:rgba(106,133,168,0.35)"></div><div class="a" style="left:770px;top:270px;width:10px;height:10px;background:rgba(106,133,168,0.44)"></div><div class="a" style="left:780px;top:270px;width:10px;height:10px;background:rgba(106,133,168,0.43)"></div><div class="a" style="left:790px;top:270px;width:10px;height:10px;background:rgba(106,133,168,0.48)"></div><div class="a" style="left:800px;top:270px;width:10px;height:10px;background:rgba(106,133,168,0.57)"></div><div class="a" style="left:810px;top:270px;width:10px;height:10px;background:rgba(106,133,168,0.51)"></div><div class="a" style="left:820px;top:270px;width:10px;height:10px;background:rgba(106,133,168,0.47)"></div><div class="a" style="left:830px;top:270px;width:10px;height:10px;background:rgba(106,133,168,0.49)"></div><div class="a" style="left:840px;top:270px;width:10px;height:10px;background:rgba(106,133,168,0.50)"></div><div class="a" style="left:850px;top:270px;width:10px;height:10px;background:rgba(106,133,168,0.36)"></div><div class="a" style="left:860px;top:270px;width:10px;height:10px;background:rgba(106,133,168,0.55)"></div><div class="a" style="left:870px;top:270px;width:10px;height:10px;background:rgba(106,133,168,0.53)"></div><div class="a" style="left:760px;top:280px;width:10px;height:10px;background:rgba(106,133,168,0.08)"></div><div class="a" style="left:770px;top:280px;width:10px;height:10px;background:rgba(106,133,168,0.08)"></div><div class="a" style="left:780px;top:280px;width:10px;height:10px;background:rgba(106,133,168,0.06)"></div><div class="a" style="left:790px;top:280px;width:10px;height:10px;background:rgba(106,133,168,0.06)"></div><div class="a" style="left:800px;top:280px;width:10px;height:10px;background:rgba(106,133,168,0.05)"></div><div class="a" style="left:810px;top:280px;width:10px;height:10px;background:rgba(106,133,168,0.07)"></div><div class="a" style="left:820px;top:280px;width:10px;height:10px;background:rgba(106,133,168,0.05)"></div><div class="a" style="left:830px;top:280px;width:10px;height:10px;background:rgba(106,133,168,0.05)"></div><div class="a" style="left:840px;top:280px;width:10px;height:10px;background:rgba(106,133,168,0.06)"></div><div class="a" style="left:850px;top:280px;width:10px;height:10px;background:rgba(106,133,168,0.05)"></div><div class="a" style="left:860px;top:280px;width:10px;height:10px;background:rgba(106,133,168,0.06)"></div><div class="a" style="left:870px;top:280px;width:10px;height:10px;background:rgba(106,133,168,0.05)"></div><div class="a" style="left:760px;top:290px;width:10px;height:10px;background:rgba(106,133,168,0.41)"></div><div class="a" style="left:770px;top:290px;width:10px;height:10px;background:rgba(106,133,168,0.45)"></div><div class="a" style="left:780px;top:290px;width:10px;height:10px;background:rgba(106,133,168,0.44)"></div><div class="a" style="left:790px;top:290px;width:10px;height:10px;background:rgba(106,133,168,0.51)"></div><div class="a" style="left:800px;top:290px;width:10px;height:10px;background:rgba(106,133,168,0.42)"></div><div class="a" style="left:810px;top:290px;width:10px;height:10px;background:rgba(106,133,168,0.65)"></div><div class="a" style="left:820px;top:290px;width:10px;height:10px;background:rgba(106,133,168,0.58)"></div><div class="a" style="left:830px;top:290px;width:10px;height:10px;background:rgba(106,133,168,0.45)"></div><div class="a" style="left:840px;top:290px;width:10px;height:10px;background:rgba(106,133,168,0.48)"></div><div class="a" style="left:850px;top:290px;width:10px;height:10px;background:rgba(106,133,168,0.50)"></div><div class="a" style="left:860px;top:290px;width:10px;height:10px;background:rgba(106,133,168,0.51)"></div><div class="a" style="left:870px;top:290px;width:10px;height:10px;background:rgba(106,133,168,0.44)"></div><div class="a" style="left:880px;top:290px;width:10px;height:10px;background:rgba(106,133,168,0.64)"></div><div class="a" style="left:890px;top:290px;width:10px;height:10px;background:rgba(106,133,168,0.68)"></div><div class="a" style="left:760px;top:300px;width:10px;height:10px;background:rgba(106,133,168,0.08)"></div><div class="a" style="left:770px;top:300px;width:10px;height:10px;background:rgba(106,133,168,0.08)"></div><div class="a" style="left:780px;top:300px;width:10px;height:10px;background:rgba(106,133,168,0.07)"></div><div class="a" style="left:790px;top:300px;width:10px;height:10px;background:rgba(106,133,168,0.07)"></div><div class="a" style="left:800px;top:300px;width:10px;height:10px;background:rgba(106,133,168,0.08)"></div><div class="a" style="left:810px;top:300px;width:10px;height:10px;background:rgba(106,133,168,0.07)"></div><div class="a" style="left:820px;top:300px;width:10px;height:10px;background:rgba(106,133,168,0.10)"></div><div class="a" style="left:830px;top:300px;width:10px;height:10px;background:rgba(106,133,168,0.07)"></div><div class="a" style="left:840px;top:300px;width:10px;height:10px;background:rgba(106,133,168,0.06)"></div><div class="a" style="left:850px;top:300px;width:10px;height:10px;background:rgba(106,133,168,0.10)"></div><div class="a" style="left:860px;top:300px;width:10px;height:10px;background:rgba(106,133,168,0.08)"></div><div class="a" style="left:870px;top:300px;width:10px;height:10px;background:rgba(106,133,168,0.07)"></div><div class="a" style="left:880px;top:300px;width:10px;height:10px;background:rgba(106,133,168,0.08)"></div><div class="a" style="left:890px;top:300px;width:10px;height:10px;background:rgba(106,133,168,0.06)"></div><div class="a" style="left:760px;top:310px;width:10px;height:10px;background:rgba(106,133,168,0.67)"></div><div class="a" style="left:770px;top:310px;width:10px;height:10px;background:rgba(106,133,168,0.82)"></div><div class="a" style="left:780px;top:310px;width:10px;height:10px;background:rgba(106,133,168,0.78)"></div><div class="a" style="left:790px;top:310px;width:10px;height:10px;background:rgba(106,133,168,0.72)"></div><div class="a" style="left:800px;top:310px;width:10px;height:10px;background:rgba(106,133,168,0.58)"></div><div class="a" style="left:810px;top:310px;width:10px;height:10px;background:rgba(106,133,168,0.62)"></div><div class="a" style="left:820px;top:310px;width:10px;height:10px;background:rgba(106,133,168,0.55)"></div><div class="a" style="left:830px;top:310px;width:10px;height:10px;background:rgba(106,133,168,0.75)"></div><div class="a" style="left:840px;top:310px;width:10px;height:10px;background:rgba(106,133,168,0.67)"></div><div class="a" style="left:850px;top:310px;width:10px;height:10px;background:rgba(106,133,168,0.75)"></div><div class="a" style="left:860px;top:310px;width:10px;height:10px;background:rgba(106,133,168,0.60)"></div><div class="a" style="left:870px;top:310px;width:10px;height:10px;background:rgba(106,133,168,0.57)"></div><div class="a" style="left:880px;top:310px;width:10px;height:10px;background:rgba(106,133,168,0.76)"></div><div class="a" style="left:890px;top:310px;width:10px;height:10px;background:rgba(106,133,168,0.82)"></div><div class="a" style="left:900px;top:310px;width:10px;height:10px;background:rgba(106,133,168,0.78)"></div><div class="a" style="left:910px;top:310px;width:10px;height:10px;background:rgba(106,133,168,0.76)"></div><div class="a" style="left:920px;top:310px;width:10px;height:10px;background:rgba(106,133,168,0.77)"></div><div class="a" style="left:930px;top:310px;width:10px;height:10px;background:rgba(106,133,168,0.74)"></div><div class="a" style="left:940px;top:310px;width:10px;height:10px;background:rgba(106,133,168,0.57)"></div><div class="a" style="left:950px;top:310px;width:10px;height:10px;background:rgba(106,133,168,0.67)"></div><div class="a" style="left:760px;top:320px;width:10px;height:10px;background:rgba(106,133,168,0.38)"></div><div class="a" style="left:770px;top:320px;width:10px;height:10px;background:rgba(106,133,168,0.32)"></div><div class="a" style="left:780px;top:320px;width:10px;height:10px;background:rgba(106,133,168,0.32)"></div><div class="a" style="left:790px;top:320px;width:10px;height:10px;background:rgba(106,133,168,0.37)"></div><div class="a" style="left:800px;top:320px;width:10px;height:10px;background:rgba(106,133,168,0.36)"></div><div class="a" style="left:810px;top:320px;width:10px;height:10px;background:rgba(106,133,168,0.45)"></div><div class="a" style="left:820px;top:320px;width:10px;height:10px;background:rgba(106,133,168,0.51)"></div><div class="a" style="left:830px;top:320px;width:10px;height:10px;background:rgba(106,133,168,0.40)"></div><div class="a" style="left:840px;top:320px;width:10px;height:10px;background:rgba(106,133,168,0.50)"></div><div class="a" style="left:850px;top:320px;width:10px;height:10px;background:rgba(106,133,168,0.51)"></div><div class="a" style="left:860px;top:320px;width:10px;height:10px;background:rgba(106,133,168,0.51)"></div><div class="a" style="left:870px;top:320px;width:10px;height:10px;background:rgba(106,133,168,0.38)"></div><div class="a" style="left:760px;top:330px;width:10px;height:10px;background:rgba(106,133,168,0.17)"></div><div class="a" style="left:770px;top:330px;width:10px;height:10px;background:rgba(106,133,168,0.17)"></div><div class="a" style="left:780px;top:330px;width:10px;height:10px;background:rgba(106,133,168,0.17)"></div><div class="a" style="left:790px;top:330px;width:10px;height:10px;background:rgba(106,133,168,0.17)"></div><div class="a" style="left:800px;top:330px;width:10px;height:10px;background:rgba(106,133,168,0.21)"></div><div class="a" style="left:810px;top:330px;width:10px;height:10px;background:rgba(106,133,168,0.24)"></div><div class="a" style="left:820px;top:330px;width:10px;height:10px;background:rgba(106,133,168,0.23)"></div><div class="a" style="left:830px;top:330px;width:10px;height:10px;background:rgba(106,133,168,0.20)"></div><div class="a" style="left:840px;top:330px;width:10px;height:10px;background:rgba(106,133,168,0.21)"></div><div class="a" style="left:850px;top:330px;width:10px;height:10px;background:rgba(106,133,168,0.23)"></div><div class="a" style="left:860px;top:330px;width:10px;height:10px;background:rgba(106,133,168,0.16)"></div><div class="a" style="left:870px;top:330px;width:10px;height:10px;background:rgba(106,133,168,0.21)"></div><div class="a" style="left:760px;top:340px;width:10px;height:10px;background:rgba(106,133,168,0.30)"></div><div class="a" style="left:770px;top:340px;width:10px;height:10px;background:rgba(106,133,168,0.28)"></div><div class="a" style="left:780px;top:340px;width:10px;height:10px;background:rgba(106,133,168,0.28)"></div><div class="a" style="left:790px;top:340px;width:10px;height:10px;background:rgba(106,133,168,0.24)"></div><div class="a" style="left:800px;top:340px;width:10px;height:10px;background:rgba(106,133,168,0.21)"></div><div class="a" style="left:810px;top:340px;width:10px;height:10px;background:rgba(106,133,168,0.28)"></div><div class="a" style="left:820px;top:340px;width:10px;height:10px;background:rgba(106,133,168,0.23)"></div><div class="a" style="left:830px;top:340px;width:10px;height:10px;background:rgba(106,133,168,0.28)"></div><div class="a" style="left:840px;top:340px;width:10px;height:10px;background:rgba(106,133,168,0.31)"></div><div class="a" style="left:850px;top:340px;width:10px;height:10px;background:rgba(106,133,168,0.23)"></div><div class="a" style="left:860px;top:340px;width:10px;height:10px;background:rgba(106,133,168,0.24)"></div><div class="a" style="left:870px;top:340px;width:10px;height:10px;background:rgba(106,133,168,0.30)"></div><div class="a" style="left:880px;top:340px;width:10px;height:10px;background:rgba(106,133,168,0.28)"></div><div class="a" style="left:890px;top:340px;width:10px;height:10px;background:rgba(106,133,168,0.21)"></div><div class="a" style="left:760px;top:350px;width:10px;height:10px;background:rgba(106,133,168,0.23)"></div><div class="a" style="left:770px;top:350px;width:10px;height:10px;background:rgba(106,133,168,0.23)"></div><div class="a" style="left:780px;top:350px;width:10px;height:10px;background:rgba(106,133,168,0.34)"></div><div class="a" style="left:790px;top:350px;width:10px;height:10px;background:rgba(106,133,168,0.32)"></div><div class="a" style="left:800px;top:350px;width:10px;height:10px;background:rgba(106,133,168,0.23)"></div><div class="a" style="left:810px;top:350px;width:10px;height:10px;background:rgba(106,133,168,0.33)"></div><div class="a" style="left:820px;top:350px;width:10px;height:10px;background:rgba(106,133,168,0.35)"></div><div class="a" style="left:830px;top:350px;width:10px;height:10px;background:rgba(106,133,168,0.30)"></div><div class="a" style="left:840px;top:350px;width:10px;height:10px;background:rgba(106,133,168,0.26)"></div><div class="a" style="left:850px;top:350px;width:10px;height:10px;background:rgba(106,133,168,0.29)"></div><div class="a" style="left:860px;top:350px;width:10px;height:10px;background:rgba(106,133,168,0.23)"></div><div class="a" style="left:870px;top:350px;width:10px;height:10px;background:rgba(106,133,168,0.21)"></div><div class="a" style="left:880px;top:350px;width:10px;height:10px;background:rgba(106,133,168,0.35)"></div><div class="a" style="left:890px;top:350px;width:10px;height:10px;background:rgba(106,133,168,0.30)"></div><div class="a" style="left:760px;top:360px;width:10px;height:10px;background:rgba(106,133,168,0.10)"></div><div class="a" style="left:770px;top:360px;width:10px;height:10px;background:rgba(106,133,168,0.12)"></div><div class="a" style="left:780px;top:360px;width:10px;height:10px;background:rgba(106,133,168,0.10)"></div><div class="a" style="left:790px;top:360px;width:10px;height:10px;background:rgba(106,133,168,0.12)"></div><div class="a" style="left:800px;top:360px;width:10px;height:10px;background:rgba(106,133,168,0.12)"></div><div class="a" style="left:810px;top:360px;width:10px;height:10px;background:rgba(106,133,168,0.08)"></div><div class="a" style="left:820px;top:360px;width:10px;height:10px;background:rgba(106,133,168,0.09)"></div><div class="a" style="left:830px;top:360px;width:10px;height:10px;background:rgba(106,133,168,0.09)"></div><div class="a" style="left:840px;top:360px;width:10px;height:10px;background:rgba(106,133,168,0.09)"></div><div class="a" style="left:850px;top:360px;width:10px;height:10px;background:rgba(106,133,168,0.10)"></div><div class="a" style="left:860px;top:360px;width:10px;height:10px;background:rgba(106,133,168,0.09)"></div><div class="a" style="left:870px;top:360px;width:10px;height:10px;background:rgba(106,133,168,0.09)"></div><div class="a" style="left:760px;top:370px;width:10px;height:10px;background:rgba(106,133,168,0.51)"></div><div class="a" style="left:770px;top:370px;width:10px;height:10px;background:rgba(106,133,168,0.76)"></div><div class="a" style="left:780px;top:370px;width:10px;height:10px;background:rgba(106,133,168,0.58)"></div><div class="a" style="left:790px;top:370px;width:10px;height:10px;background:rgba(106,133,168,0.61)"></div><div class="a" style="left:800px;top:370px;width:10px;height:10px;background:rgba(106,133,168,0.65)"></div><div class="a" style="left:810px;top:370px;width:10px;height:10px;background:rgba(106,133,168,0.75)"></div><div class="a" style="left:820px;top:370px;width:10px;height:10px;background:rgba(106,133,168,0.60)"></div><div class="a" style="left:830px;top:370px;width:10px;height:10px;background:rgba(106,133,168,0.76)"></div><div class="a" style="left:840px;top:370px;width:10px;height:10px;background:rgba(106,133,168,0.63)"></div><div class="a" style="left:850px;top:370px;width:10px;height:10px;background:rgba(106,133,168,0.64)"></div><div class="a" style="left:860px;top:370px;width:10px;height:10px;background:rgba(106,133,168,0.63)"></div><div class="a" style="left:870px;top:370px;width:10px;height:10px;background:rgba(106,133,168,0.48)"></div><div class="a" style="left:760px;top:380px;width:10px;height:10px;background:rgba(106,133,168,0.05)"></div><div class="a" style="left:770px;top:380px;width:10px;height:10px;background:rgba(106,133,168,0.04)"></div><div class="a" style="left:780px;top:380px;width:10px;height:10px;background:rgba(106,133,168,0.04)"></div><div class="a" style="left:790px;top:380px;width:10px;height:10px;background:rgba(106,133,168,0.06)"></div><div class="a" style="left:800px;top:380px;width:10px;height:10px;background:rgba(106,133,168,0.04)"></div><div class="a" style="left:810px;top:380px;width:10px;height:10px;background:rgba(106,133,168,0.05)"></div><div class="a" style="left:820px;top:380px;width:10px;height:10px;background:rgba(106,133,168,0.06)"></div><div class="a" style="left:830px;top:380px;width:10px;height:10px;background:rgba(106,133,168,0.05)"></div><div class="a" style="left:840px;top:380px;width:10px;height:10px;background:rgba(106,133,168,0.05)"></div><div class="a" style="left:850px;top:380px;width:10px;height:10px;background:rgba(106,133,168,0.05)"></div><div class="a" style="left:860px;top:380px;width:10px;height:10px;background:rgba(106,133,168,0.05)"></div><div class="a" style="left:870px;top:380px;width:10px;height:10px;background:rgba(106,133,168,0.06)"></div><div class="a" style="left:760px;top:390px;width:10px;height:10px;background:rgba(106,133,168,0.33)"></div><div class="a" style="left:770px;top:390px;width:10px;height:10px;background:rgba(106,133,168,0.42)"></div><div class="a" style="left:780px;top:390px;width:10px;height:10px;background:rgba(106,133,168,0.36)"></div><div class="a" style="left:790px;top:390px;width:10px;height:10px;background:rgba(106,133,168,0.37)"></div><div class="a" style="left:800px;top:390px;width:10px;height:10px;background:rgba(106,133,168,0.47)"></div><div class="a" style="left:810px;top:390px;width:10px;height:10px;background:rgba(106,133,168,0.41)"></div><div class="a" style="left:820px;top:390px;width:10px;height:10px;background:rgba(106,133,168,0.43)"></div><div class="a" style="left:830px;top:390px;width:10px;height:10px;background:rgba(106,133,168,0.47)"></div><div class="a" style="left:840px;top:390px;width:10px;height:10px;background:rgba(106,133,168,0.50)"></div><div class="a" style="left:850px;top:390px;width:10px;height:10px;background:rgba(106,133,168,0.40)"></div><div class="a" style="left:860px;top:390px;width:10px;height:10px;background:rgba(106,133,168,0.44)"></div><div class="a" style="left:870px;top:390px;width:10px;height:10px;background:rgba(106,133,168,0.41)"></div><div class="a" style="left:760px;top:400px;width:10px;height:10px;background:rgba(106,133,168,0.13)"></div><div class="a" style="left:770px;top:400px;width:10px;height:10px;background:rgba(106,133,168,0.14)"></div><div class="a" style="left:780px;top:400px;width:10px;height:10px;background:rgba(106,133,168,0.13)"></div><div class="a" style="left:790px;top:400px;width:10px;height:10px;background:rgba(106,133,168,0.13)"></div><div class="a" style="left:800px;top:400px;width:10px;height:10px;background:rgba(106,133,168,0.13)"></div><div class="a" style="left:810px;top:400px;width:10px;height:10px;background:rgba(106,133,168,0.16)"></div><div class="a" style="left:820px;top:400px;width:10px;height:10px;background:rgba(106,133,168,0.15)"></div><div class="a" style="left:830px;top:400px;width:10px;height:10px;background:rgba(106,133,168,0.16)"></div><div class="a" style="left:840px;top:400px;width:10px;height:10px;background:rgba(106,133,168,0.16)"></div><div class="a" style="left:850px;top:400px;width:10px;height:10px;background:rgba(106,133,168,0.12)"></div><div class="a" style="left:860px;top:400px;width:10px;height:10px;background:rgba(106,133,168,0.14)"></div><div class="a" style="left:870px;top:400px;width:10px;height:10px;background:rgba(106,133,168,0.16)"></div><div class="a" style="left:760px;top:410px;width:10px;height:10px;background:rgba(106,133,168,0.35)"></div><div class="a" style="left:770px;top:410px;width:10px;height:10px;background:rgba(106,133,168,0.24)"></div><div class="a" style="left:780px;top:410px;width:10px;height:10px;background:rgba(106,133,168,0.24)"></div><div class="a" style="left:790px;top:410px;width:10px;height:10px;background:rgba(106,133,168,0.29)"></div><div class="a" style="left:800px;top:410px;width:10px;height:10px;background:rgba(106,133,168,0.23)"></div><div class="a" style="left:810px;top:410px;width:10px;height:10px;background:rgba(106,133,168,0.26)"></div><div class="a" style="left:820px;top:410px;width:10px;height:10px;background:rgba(106,133,168,0.23)"></div><div class="a" style="left:830px;top:410px;width:10px;height:10px;background:rgba(106,133,168,0.32)"></div><div class="a" style="left:840px;top:410px;width:10px;height:10px;background:rgba(106,133,168,0.34)"></div><div class="a" style="left:850px;top:410px;width:10px;height:10px;background:rgba(106,133,168,0.36)"></div><div class="a" style="left:860px;top:410px;width:10px;height:10px;background:rgba(106,133,168,0.25)"></div><div class="a" style="left:870px;top:410px;width:10px;height:10px;background:rgba(106,133,168,0.33)"></div><div class="a" style="left:880px;top:410px;width:10px;height:10px;background:rgba(106,133,168,0.32)"></div><div class="a" style="left:890px;top:410px;width:10px;height:10px;background:rgba(106,133,168,0.24)"></div><div class="a" style="left:900px;top:410px;width:10px;height:10px;background:rgba(106,133,168,0.35)"></div><div class="a" style="left:910px;top:410px;width:10px;height:10px;background:rgba(106,133,168,0.37)"></div><div class="a" style="left:920px;top:410px;width:10px;height:10px;background:rgba(106,133,168,0.26)"></div><div class="a" style="left:930px;top:410px;width:10px;height:10px;background:rgba(106,133,168,0.36)"></div><div class="a" style="left:940px;top:410px;width:10px;height:10px;background:rgba(106,133,168,0.28)"></div><div class="a" style="left:760px;top:420px;width:10px;height:10px;background:rgba(106,133,168,0.54)"></div><div class="a" style="left:770px;top:420px;width:10px;height:10px;background:rgba(106,133,168,0.68)"></div><div class="a" style="left:780px;top:420px;width:10px;height:10px;background:rgba(106,133,168,0.64)"></div><div class="a" style="left:790px;top:420px;width:10px;height:10px;background:rgba(106,133,168,0.45)"></div><div class="a" style="left:800px;top:420px;width:10px;height:10px;background:rgba(106,133,168,0.53)"></div><div class="a" style="left:810px;top:420px;width:10px;height:10px;background:rgba(106,133,168,0.55)"></div><div class="a" style="left:820px;top:420px;width:10px;height:10px;background:rgba(106,133,168,0.50)"></div><div class="a" style="left:830px;top:420px;width:10px;height:10px;background:rgba(106,133,168,0.46)"></div><div class="a" style="left:840px;top:420px;width:10px;height:10px;background:rgba(106,133,168,0.50)"></div><div class="a" style="left:850px;top:420px;width:10px;height:10px;background:rgba(106,133,168,0.60)"></div><div class="a" style="left:860px;top:420px;width:10px;height:10px;background:rgba(106,133,168,0.41)"></div><div class="a" style="left:870px;top:420px;width:10px;height:10px;background:rgba(106,133,168,0.56)"></div><div class="a" style="left:880px;top:420px;width:10px;height:10px;background:rgba(106,133,168,0.53)"></div><div class="a" style="left:890px;top:420px;width:10px;height:10px;background:rgba(106,133,168,0.41)"></div><div class="a" style="left:900px;top:420px;width:10px;height:10px;background:rgba(106,133,168,0.50)"></div><div class="a" style="left:910px;top:420px;width:10px;height:10px;background:rgba(106,133,168,0.58)"></div><div class="a" style="left:920px;top:420px;width:10px;height:10px;background:rgba(106,133,168,0.55)"></div><div class="a" style="left:930px;top:420px;width:10px;height:10px;background:rgba(106,133,168,0.43)"></div><div class="a" style="left:940px;top:420px;width:10px;height:10px;background:rgba(106,133,168,0.68)"></div><div class="a" style="left:760px;top:430px;width:10px;height:10px;background:rgba(106,133,168,0.08)"></div><div class="a" style="left:770px;top:430px;width:10px;height:10px;background:rgba(106,133,168,0.08)"></div><div class="a" style="left:780px;top:430px;width:10px;height:10px;background:rgba(106,133,168,0.05)"></div><div class="a" style="left:790px;top:430px;width:10px;height:10px;background:rgba(106,133,168,0.06)"></div><div class="a" style="left:800px;top:430px;width:10px;height:10px;background:rgba(106,133,168,0.05)"></div><div class="a" style="left:810px;top:430px;width:10px;height:10px;background:rgba(106,133,168,0.08)"></div><div class="a" style="left:820px;top:430px;width:10px;height:10px;background:rgba(106,133,168,0.06)"></div><div class="a" style="left:830px;top:430px;width:10px;height:10px;background:rgba(106,133,168,0.05)"></div><div class="a" style="left:840px;top:430px;width:10px;height:10px;background:rgba(106,133,168,0.06)"></div><div class="a" style="left:850px;top:430px;width:10px;height:10px;background:rgba(106,133,168,0.08)"></div><div class="a" style="left:860px;top:430px;width:10px;height:10px;background:rgba(106,133,168,0.08)"></div><div class="a" style="left:870px;top:430px;width:10px;height:10px;background:rgba(106,133,168,0.06)"></div><div class="a" style="left:880px;top:430px;width:10px;height:10px;background:rgba(106,133,168,0.05)"></div><div class="a" style="left:890px;top:430px;width:10px;height:10px;background:rgba(106,133,168,0.08)"></div><div class="a" style="left:900px;top:430px;width:10px;height:10px;background:rgba(106,133,168,0.07)"></div><div class="a" style="left:910px;top:430px;width:10px;height:10px;background:rgba(106,133,168,0.07)"></div><div class="a" style="left:920px;top:430px;width:10px;height:10px;background:rgba(106,133,168,0.05)"></div><div class="a" style="left:930px;top:430px;width:10px;height:10px;background:rgba(106,133,168,0.05)"></div><div class="a" style="left:940px;top:430px;width:10px;height:10px;background:rgba(106,133,168,0.07)"></div><div class="a" style="left:950px;top:430px;width:10px;height:10px;background:rgba(106,133,168,0.06)"></div><div class="a" style="left:760px;top:440px;width:10px;height:10px;background:rgba(106,133,168,0.36)"></div><div class="a" style="left:770px;top:440px;width:10px;height:10px;background:rgba(106,133,168,0.56)"></div><div class="a" style="left:780px;top:440px;width:10px;height:10px;background:rgba(106,133,168,0.49)"></div><div class="a" style="left:790px;top:440px;width:10px;height:10px;background:rgba(106,133,168,0.53)"></div><div class="a" style="left:800px;top:440px;width:10px;height:10px;background:rgba(106,133,168,0.37)"></div><div class="a" style="left:810px;top:440px;width:10px;height:10px;background:rgba(106,133,168,0.54)"></div><div class="a" style="left:820px;top:440px;width:10px;height:10px;background:rgba(106,133,168,0.36)"></div><div class="a" style="left:830px;top:440px;width:10px;height:10px;background:rgba(106,133,168,0.55)"></div><div class="a" style="left:840px;top:440px;width:10px;height:10px;background:rgba(106,133,168,0.45)"></div><div class="a" style="left:850px;top:440px;width:10px;height:10px;background:rgba(106,133,168,0.42)"></div><div class="a" style="left:860px;top:440px;width:10px;height:10px;background:rgba(106,133,168,0.47)"></div><div class="a" style="left:870px;top:440px;width:10px;height:10px;background:rgba(106,133,168,0.56)"></div><div class="a" style="left:880px;top:440px;width:10px;height:10px;background:rgba(106,133,168,0.41)"></div><div class="a" style="left:890px;top:440px;width:10px;height:10px;background:rgba(106,133,168,0.38)"></div><div class="a" style="left:760px;top:450px;width:10px;height:10px;background:rgba(106,133,168,0.10)"></div><div class="a" style="left:770px;top:450px;width:10px;height:10px;background:rgba(106,133,168,0.09)"></div><div class="a" style="left:780px;top:450px;width:10px;height:10px;background:rgba(106,133,168,0.08)"></div><div class="a" style="left:790px;top:450px;width:10px;height:10px;background:rgba(106,133,168,0.08)"></div><div class="a" style="left:800px;top:450px;width:10px;height:10px;background:rgba(106,133,168,0.08)"></div><div class="a" style="left:810px;top:450px;width:10px;height:10px;background:rgba(106,133,168,0.08)"></div><div class="a" style="left:820px;top:450px;width:10px;height:10px;background:rgba(106,133,168,0.09)"></div><div class="a" style="left:830px;top:450px;width:10px;height:10px;background:rgba(106,133,168,0.09)"></div><div class="a" style="left:840px;top:450px;width:10px;height:10px;background:rgba(106,133,168,0.11)"></div><div class="a" style="left:850px;top:450px;width:10px;height:10px;background:rgba(106,133,168,0.09)"></div><div class="a" style="left:860px;top:450px;width:10px;height:10px;background:rgba(106,133,168,0.10)"></div><div class="a" style="left:870px;top:450px;width:10px;height:10px;background:rgba(106,133,168,0.08)"></div><div class="a" style="left:880px;top:450px;width:10px;height:10px;background:rgba(106,133,168,0.09)"></div><div class="a" style="left:890px;top:450px;width:10px;height:10px;background:rgba(106,133,168,0.08)"></div><div class="a" style="left:760px;top:460px;width:10px;height:10px;background:rgba(106,133,168,0.36)"></div><div class="a" style="left:770px;top:460px;width:10px;height:10px;background:rgba(106,133,168,0.31)"></div><div class="a" style="left:780px;top:460px;width:10px;height:10px;background:rgba(106,133,168,0.46)"></div><div class="a" style="left:790px;top:460px;width:10px;height:10px;background:rgba(106,133,168,0.42)"></div><div class="a" style="left:800px;top:460px;width:10px;height:10px;background:rgba(106,133,168,0.35)"></div><div class="a" style="left:810px;top:460px;width:10px;height:10px;background:rgba(106,133,168,0.41)"></div><div class="a" style="left:820px;top:460px;width:10px;height:10px;background:rgba(106,133,168,0.50)"></div><div class="a" style="left:830px;top:460px;width:10px;height:10px;background:rgba(106,133,168,0.33)"></div><div class="a" style="left:840px;top:460px;width:10px;height:10px;background:rgba(106,133,168,0.48)"></div><div class="a" style="left:850px;top:460px;width:10px;height:10px;background:rgba(106,133,168,0.40)"></div><div class="a" style="left:860px;top:460px;width:10px;height:10px;background:rgba(106,133,168,0.41)"></div><div class="a" style="left:870px;top:460px;width:10px;height:10px;background:rgba(106,133,168,0.48)"></div><div class="a" style="left:880px;top:460px;width:10px;height:10px;background:rgba(106,133,168,0.39)"></div><div class="a" style="left:890px;top:460px;width:10px;height:10px;background:rgba(106,133,168,0.41)"></div><div class="a" style="left:900px;top:460px;width:10px;height:10px;background:rgba(106,133,168,0.45)"></div><div class="a" style="left:910px;top:460px;width:10px;height:10px;background:rgba(106,133,168,0.51)"></div><div class="a" style="left:920px;top:460px;width:10px;height:10px;background:rgba(106,133,168,0.38)"></div><div class="a" style="left:930px;top:460px;width:10px;height:10px;background:rgba(106,133,168,0.48)"></div><div class="a" style="left:760px;top:470px;width:10px;height:10px;background:rgba(106,133,168,0.46)"></div><div class="a" style="left:770px;top:470px;width:10px;height:10px;background:rgba(106,133,168,0.44)"></div><div class="a" style="left:780px;top:470px;width:10px;height:10px;background:rgba(106,133,168,0.39)"></div><div class="a" style="left:790px;top:470px;width:10px;height:10px;background:rgba(106,133,168,0.38)"></div><div class="a" style="left:800px;top:470px;width:10px;height:10px;background:rgba(106,133,168,0.32)"></div><div class="a" style="left:810px;top:470px;width:10px;height:10px;background:rgba(106,133,168,0.34)"></div><div class="a" style="left:820px;top:470px;width:10px;height:10px;background:rgba(106,133,168,0.32)"></div><div class="a" style="left:830px;top:470px;width:10px;height:10px;background:rgba(106,133,168,0.46)"></div><div class="a" style="left:840px;top:470px;width:10px;height:10px;background:rgba(106,133,168,0.36)"></div><div class="a" style="left:850px;top:470px;width:10px;height:10px;background:rgba(106,133,168,0.34)"></div><div class="a" style="left:860px;top:470px;width:10px;height:10px;background:rgba(106,133,168,0.33)"></div><div class="a" style="left:870px;top:470px;width:10px;height:10px;background:rgba(106,133,168,0.48)"></div><div class="a" style="left:880px;top:470px;width:10px;height:10px;background:rgba(106,133,168,0.49)"></div><div class="a" style="left:890px;top:470px;width:10px;height:10px;background:rgba(106,133,168,0.45)"></div><div class="a" style="left:900px;top:470px;width:10px;height:10px;background:rgba(106,133,168,0.37)"></div><div class="a" style="left:910px;top:470px;width:10px;height:10px;background:rgba(106,133,168,0.36)"></div><div class="a" style="left:920px;top:470px;width:10px;height:10px;background:rgba(106,133,168,0.37)"></div><div class="a" style="left:930px;top:470px;width:10px;height:10px;background:rgba(106,133,168,0.40)"></div><div class="a" style="left:760px;top:480px;width:10px;height:10px;background:rgba(106,133,168,0.07)"></div><div class="a" style="left:770px;top:480px;width:10px;height:10px;background:rgba(106,133,168,0.08)"></div><div class="a" style="left:780px;top:480px;width:10px;height:10px;background:rgba(106,133,168,0.07)"></div><div class="a" style="left:790px;top:480px;width:10px;height:10px;background:rgba(106,133,168,0.10)"></div><div class="a" style="left:800px;top:480px;width:10px;height:10px;background:rgba(106,133,168,0.10)"></div><div class="a" style="left:810px;top:480px;width:10px;height:10px;background:rgba(106,133,168,0.08)"></div><div class="a" style="left:820px;top:480px;width:10px;height:10px;background:rgba(106,133,168,0.07)"></div><div class="a" style="left:830px;top:480px;width:10px;height:10px;background:rgba(106,133,168,0.10)"></div><div class="a" style="left:840px;top:480px;width:10px;height:10px;background:rgba(106,133,168,0.07)"></div><div class="a" style="left:850px;top:480px;width:10px;height:10px;background:rgba(106,133,168,0.08)"></div><div class="a" style="left:860px;top:480px;width:10px;height:10px;background:rgba(106,133,168,0.06)"></div><div class="a" style="left:870px;top:480px;width:10px;height:10px;background:rgba(106,133,168,0.08)"></div><div class="a" style="left:880px;top:480px;width:10px;height:10px;background:rgba(106,133,168,0.08)"></div><div class="a" style="left:890px;top:480px;width:10px;height:10px;background:rgba(106,133,168,0.08)"></div><div class="a" style="left:900px;top:480px;width:10px;height:10px;background:rgba(106,133,168,0.07)"></div><div class="a" style="left:910px;top:480px;width:10px;height:10px;background:rgba(106,133,168,0.08)"></div><div class="a" style="left:760px;top:490px;width:10px;height:10px;background:rgba(106,133,168,0.43)"></div><div class="a" style="left:770px;top:490px;width:10px;height:10px;background:rgba(106,133,168,0.51)"></div><div class="a" style="left:780px;top:490px;width:10px;height:10px;background:rgba(106,133,168,0.46)"></div><div class="a" style="left:790px;top:490px;width:10px;height:10px;background:rgba(106,133,168,0.55)"></div><div class="a" style="left:800px;top:490px;width:10px;height:10px;background:rgba(106,133,168,0.45)"></div><div class="a" style="left:810px;top:490px;width:10px;height:10px;background:rgba(106,133,168,0.44)"></div><div class="a" style="left:820px;top:490px;width:10px;height:10px;background:rgba(106,133,168,0.52)"></div><div class="a" style="left:830px;top:490px;width:10px;height:10px;background:rgba(106,133,168,0.50)"></div><div class="a" style="left:840px;top:490px;width:10px;height:10px;background:rgba(106,133,168,0.60)"></div><div class="a" style="left:850px;top:490px;width:10px;height:10px;background:rgba(106,133,168,0.59)"></div><div class="a" style="left:860px;top:490px;width:10px;height:10px;background:rgba(106,133,168,0.65)"></div><div class="a" style="left:870px;top:490px;width:10px;height:10px;background:rgba(106,133,168,0.62)"></div><div class="a" style="left:880px;top:490px;width:10px;height:10px;background:rgba(106,133,168,0.64)"></div><div class="a" style="left:890px;top:490px;width:10px;height:10px;background:rgba(106,133,168,0.69)"></div><div class="a" style="left:900px;top:490px;width:10px;height:10px;background:rgba(106,133,168,0.55)"></div><div class="a" style="left:910px;top:490px;width:10px;height:10px;background:rgba(106,133,168,0.53)"></div></div>
<div class="a" style="left:0;top:0;filter:blur(0.5px)"><div class="a" style="left:1100px;top:260px;width:10px;height:10px;background:rgba(106,133,168,0.41)"></div><div class="a" style="left:1110px;top:260px;width:10px;height:10px;background:rgba(106,133,168,0.27)"></div><div class="a" style="left:1120px;top:260px;width:10px;height:10px;background:rgba(106,133,168,0.37)"></div><div class="a" style="left:1130px;top:260px;width:10px;height:10px;background:rgba(106,133,168,0.35)"></div><div class="a" style="left:1100px;top:270px;width:10px;height:10px;background:rgba(106,133,168,0.38)"></div><div class="a" style="left:1110px;top:270px;width:10px;height:10px;background:rgba(106,133,168,0.58)"></div><div class="a" style="left:1120px;top:270px;width:10px;height:10px;background:rgba(106,133,168,0.59)"></div><div class="a" style="left:1130px;top:270px;width:10px;height:10px;background:rgba(106,133,168,0.53)"></div><div class="a" style="left:1100px;top:280px;width:10px;height:10px;background:rgba(106,133,168,0.09)"></div><div class="a" style="left:1110px;top:280px;width:10px;height:10px;background:rgba(106,133,168,0.10)"></div><div class="a" style="left:1100px;top:290px;width:10px;height:10px;background:rgba(106,133,168,0.51)"></div><div class="a" style="left:1110px;top:290px;width:10px;height:10px;background:rgba(106,133,168,0.63)"></div></div>
<div class="a" style="left:226px;top:513px;color:#163260;font-size:12px;line-height:14px;-webkit-text-stroke:0.2px #163260">记录总数:</div>
<div class="a" style="left:294px;top:513px;color:#f40c0c;font-size:12px;line-height:14px">48</div>
<div class="a" style="left:937px;top:518px;width:38px;height:18px;background:#fff;border:1px solid #dcdcdc;color:#999;text-align:center;font-size:12px;line-height:16px">首页</div>
<div class="a" style="left:980px;top:518px;width:38px;height:18px;background:#fff;border:1px solid #dcdcdc;color:#999;text-align:center;font-size:12px;line-height:16px">上页</div>
<div class="a" style="left:1047px;top:518px;width:19px;height:18px;background:#fff;border:1px solid #dcdcdc;color:#1a5ab8;text-align:center;font-size:12px;line-height:16px">2</div>
<div class="a" style="left:1072px;top:518px;width:19px;height:18px;background:#fff;border:1px solid #dcdcdc;color:#1a5ab8;text-align:center;font-size:12px;line-height:16px">3</div>
<div class="a" style="left:1097px;top:518px;width:19px;height:18px;background:#fff;border:1px solid #dcdcdc;color:#1a5ab8;text-align:center;font-size:12px;line-height:16px">4</div>
<div class="a" style="left:1122px;top:518px;width:19px;height:18px;background:#fff;border:1px solid #dcdcdc;color:#1a5ab8;text-align:center;font-size:12px;line-height:16px">5</div>
<div class="a" style="left:1147px;top:518px;width:38px;height:18px;background:#fff;border:1px solid #dcdcdc;color:#1a5ab8;text-align:center;font-size:12px;line-height:16px">下页</div>
<div class="a" style="left:1190px;top:518px;width:38px;height:18px;background:#fff;border:1px solid #dcdcdc;color:#1a5ab8;text-align:center;font-size:12px;line-height:16px">尾页</div>
<div class="a" style="left:1028px;top:519px;color:#1a2a40;font-weight:bold;font-size:12px;line-height:16px">1</div>
<div class="a" style="left:1255px;top:85px;width:9px;height:665px;background:linear-gradient(90deg,#dfe4ee,#e9edf5)"></div>
<div class="a" style="left:1264px;top:85px;width:17px;height:665px;background:#f0f0f0"></div>
<div class="a" style="left:1264px;top:85px;width:1px;height:665px;background:#e2e2e2"></div>
<div class="a" style="left:1280px;top:85px;width:1px;height:665px;background:#404040"></div>
<div class="a" style="left:1268px;top:92px;width:0px;height:0px;border-left:4px solid transparent;border-right:4px solid transparent;border-bottom:4px solid #404040"></div>
<div class="a" style="left:1268px;top:741px;width:0px;height:0px;border-left:4px solid transparent;border-right:4px solid transparent;border-top:4px solid #404040"></div>
<div class="a" style="left:1264px;top:104px;width:16px;height:610px;background:linear-gradient(90deg,#fafafa,#ececec 40%,#d4d4d4 85%,#c0c0c0);border:1px solid #8a8a8a;border-radius:2px"></div>
<div class="a" style="left:1268px;top:404px;width:6px;height:1px;background:#505050"></div>
<div class="a" style="left:1268px;top:407px;width:6px;height:1px;background:#505050"></div>
<div class="a" style="left:1268px;top:410px;width:6px;height:1px;background:#505050"></div>
<div class="a" style="left:1075px;top:633px;width:188px;height:117px;background:#cfdef4;border:1px solid #8898c0;border-bottom-color:#4a4a8a"></div>
<div class="a" style="left:1081px;top:641px;color:#1a3356;font-size:12px;line-height:14px">任务提示:</div>
<div class="a" style="left:1248px;top:641px;color:#f40c0c;font-size:12px;line-height:14px">×</div>
<div class="a" style="left:1077px;top:659px;width:184px;height:89px;border:1px solid #7f8fc0;border-top-color:#8fa0c8"></div>
<div class="a" style="left:1091px;top:681px;color:#1a3356;font-size:12px;line-height:16px">您一共有 <span style="color:#f40c0c;font-family:'Liberation Serif',serif;font-weight:bold;font-size:16px;text-decoration:underline;margin:0 2px 0 3px">196</span> 条待处理流程</div>
<div class="a" style="left:1126px;top:711px;color:#f40c0c;font-size:12px;line-height:14px">请注意及时处理</div>
<div id="ftrb" class="a"></div><div id="ftr" class="a"></div>
<div class="a blur" style="left:563px;top:756px;width:56px;height:6px;background:#a8b4c0;opacity:0.6"></div>
<div class="a" style="left:565px;top:760px;width:52px;height:11px;background:#7c8a98;filter:blur(0.8px)"></div>
<div class="a" style="left:628px;top:759px;color:#fff;font-size:12px;line-height:14px">协同办公系统</div>
<svg class="a" style="left:620px;top:760px" width="8" height="12" viewBox="0 0 8 12"><path d="M1.5 11.5 V1.5 H6.5 M3.5 11 V3.5 H6.5" fill="none" stroke="#fff" stroke-width="1"/></svg>
<svg class="a" style="left:700px;top:760px" width="8" height="12" viewBox="0 0 8 12"><path d="M6.5 0.5 V10.5 H1.5 M4.5 1 V8.5 H1.5" fill="none" stroke="#fff" stroke-width="1"/></svg>
<svg class="a" style="left:1080px;top:757px" width="201" height="19"><defs><linearGradient id="fg" x1="0" y1="0" x2="0" y2="1"><stop offset="0" stop-color="#34495a"/><stop offset="0.5" stop-color="#1a2a36"/><stop offset="1" stop-color="#0a1018"/></linearGradient></defs><path d="M8 19 L25 0 L201 0 L201 19 Z" fill="url(#fg)"/><path d="M8 19 L25 0" stroke="#6a8aa0" stroke-width="1"/></svg>
<div class="a" style="left:0;top:0;filter:blur(0.7px)"><div class="a" style="left:1166px;top:756px;width:96px;height:4px;background:#8494a4;opacity:0.5"></div><div class="a" style="left:1168px;top:759px;width:10px;height:10px;background:#5c6c7c"></div><div class="a" style="left:1178px;top:759px;width:10px;height:10px;background:#6c7c8c"></div><div class="a" style="left:1188px;top:759px;width:10px;height:10px;background:#7a8a98"></div><div class="a" style="left:1198px;top:759px;width:10px;height:10px;background:#687888"></div><div class="a" style="left:1208px;top:759px;width:10px;height:10px;background:#7c8a98"></div><div class="a" style="left:1218px;top:759px;width:10px;height:10px;background:#8694a2"></div><div class="a" style="left:1228px;top:759px;width:10px;height:10px;background:#7e8c9a"></div><div class="a" style="left:1238px;top:759px;width:10px;height:10px;background:#8a98a6"></div><div class="a" style="left:1248px;top:759px;width:10px;height:10px;background:#7a8896"></div><div class="a" style="left:1258px;top:759px;width:5px;height:10px;background:#6a7a8a;opacity:0.6"></div></div>
<div class="a" style="left:1280px;top:0px;width:1px;height:776px;background:#161616"></div>
</body></html>
